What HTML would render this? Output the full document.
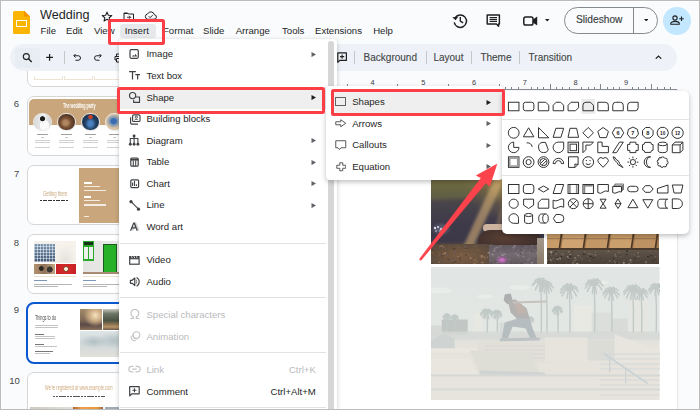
<!DOCTYPE html>
<html><head><meta charset="utf-8">
<style>
*{margin:0;padding:0;box-sizing:border-box}
html,body{width:700px;height:410px;overflow:hidden}
body{position:relative;background:#f9fbfd;font-family:"Liberation Sans",sans-serif;color:#1f1f1f}
.a{position:absolute}
.t{position:absolute;white-space:nowrap;line-height:1}
.mb{font-size:9.6px;color:#1f1f1f;top:26.1px}
.tb{font-size:10px;color:#444746;top:52.5px;-webkit-text-stroke:.12px #444746}
.vd{position:absolute;width:1px;background:#c7c7c7}
.rn{position:absolute;top:78.6px;font-size:7.4px;color:#3c4043;line-height:1}
</style></head><body>

<!-- ===== HEADER ===== -->
<div class="a" style="left:13px;top:10.5px;width:17px;height:23.5px;background:#fbb400;border-radius:1.5px;clip-path:polygon(0 0,64% 0,100% 26%,100% 100%,0 100%)"></div>
<div class="a" style="left:24px;top:10.5px;width:6px;height:6px;background:#f29500;clip-path:polygon(0 0,100% 100%,0 100%)"></div>
<div class="a" style="left:16px;top:20.2px;width:11px;height:6.6px;border:1.3px solid #fff"></div>

<div class="t" style="left:40px;top:8.8px;font-size:12.6px;color:#1f1f1f">Wedding</div>
<svg class="a" style="left:101px;top:10.5px" width="12" height="11" viewBox="0 0 24 22"><path d="M12 2.2l2.7 6.2 6.8.6-5.1 4.5 1.5 6.6L12 16.6l-5.9 3.5 1.5-6.6L2.5 9l6.8-.6z" fill="none" stroke="#1f1f1f" stroke-width="2.2" stroke-linejoin="round"/></svg>
<svg class="a" style="left:123px;top:11.5px" width="11.5" height="9" viewBox="0 0 23 18"><path d="M2 2h7l2 2h10v12H2z" fill="none" stroke="#1f1f1f" stroke-width="2"/><path d="M2 2h7l2 2H2z" fill="#1f1f1f"/><path d="M8 10.5h7M12 7.5l3 3-3 3" fill="none" stroke="#1f1f1f" stroke-width="1.8"/></svg>
<svg class="a" style="left:143.5px;top:11px" width="13" height="9" viewBox="0 0 26 18"><path d="M7 16.5h13a4.5 4.5 0 0 0 .6-9 7 7 0 0 0-13.2-1.8A5.5 5.5 0 0 0 7 16.5z" fill="none" stroke="#1f1f1f" stroke-width="2"/><path d="M9.5 10.5l2.8 2.8 5-5" fill="none" stroke="#1f1f1f" stroke-width="2"/></svg>

<div class="t mb" style="left:40.6px">File</div>
<div class="t mb" style="left:66px">Edit</div>
<div class="t mb" style="left:94px">View</div>
<div class="a" style="left:120px;top:23.5px;width:35.5px;height:14px;background:#e6e8eb;border-radius:3px"></div>
<div class="t mb" style="left:124.8px">Insert</div>
<div class="t mb" style="left:163px">Format</div>
<div class="t mb" style="left:203px">Slide</div>
<div class="t mb" style="left:235.7px">Arrange</div>
<div class="t mb" style="left:282px">Tools</div>
<div class="t mb" style="left:315px">Extensions</div>
<div class="t mb" style="left:373.2px">Help</div>


<!-- right header -->
<svg class="a" style="left:0;top:0" width="700" height="410" viewBox="0 0 700 410"><path d="M455.2 17.6A6.2 6.2 0 1 1 454.2 22.4" fill="none" stroke="#1f1f1f" stroke-width="1.5"/><path d="M452.4 17.2l3.2 3.1 2.6-3.6z" fill="#1f1f1f"/><path d="M460.3 17v4.1l2.8 1.8" fill="none" stroke="#1f1f1f" stroke-width="1.35"/><path d="M487.2 14.9h12.2v9.2h-.8v2.2l-2.2-2.2h-9.2z" fill="none" stroke="#1f1f1f" stroke-width="1.45" stroke-linejoin="round"/><path d="M489.6 17.6h7.4M489.6 19.5h7.4M489.6 21.4h7.4" stroke="#1f1f1f" stroke-width="1.1"/><rect x="523.8" y="17" width="9.2" height="8" rx="1.8" fill="none" stroke="#1f1f1f" stroke-width="1.5"/><path d="M533 19.5l4.2-2.9v8.8l-4.2-2.9z" fill="#1f1f1f"/></svg>
<svg class="a" style="left:545px;top:19px" width="4.5" height="2.5" viewBox="0 0 9 5"><path d="M0 0h9L4.5 5z" fill="#1f1f1f"/></svg>
<div class="a" style="left:564.3px;top:6.6px;width:94px;height:27px;border:1px solid #86898c;border-radius:13.5px"></div>
<div class="a" style="left:633px;top:7px;width:1px;height:26px;background:#86898c"></div>
<div class="t" style="left:576px;top:15.2px;font-size:10.2px;color:#3a3d40;-webkit-text-stroke:.15px #3a3d40">Slideshow</div>
<svg class="a" style="left:643.5px;top:18.5px" width="4.5" height="2.5" viewBox="0 0 9 5"><path d="M0 0h9L4.5 5z" fill="#1f1f1f"/></svg>
<div class="a" style="left:663px;top:6.5px;width:28px;height:28px;border-radius:50%;background:#c2e7ff"></div>
<svg class="a" style="left:670.2px;top:14.8px" width="14.5" height="10" viewBox="0 0 29 20"><circle cx="10" cy="6" r="4.2" fill="none" stroke="#1f1f1f" stroke-width="2.2"/><path d="M1.5 18.5v-1.5c0-2.5 4-4.3 8.5-4.3s8.5 1.8 8.5 4.3v1.5z" fill="none" stroke="#1f1f1f" stroke-width="2.2"/><path d="M23 3v9M18.5 7.5h9" stroke="#1f1f1f" stroke-width="2.2"/></svg>
<!-- ===== TOOLBAR ===== -->
<div class="a" style="left:9.5px;top:44px;width:667.5px;height:26.5px;background:#eef2f8;border-radius:13.5px"></div>
<div class="a" style="left:14.9px;top:48.2px;width:25.2px;height:19.7px;background:#e8edf3;border-radius:2.5px"></div>
<svg class="a" style="left:0;top:0" width="700" height="410" viewBox="0 0 700 410"><circle cx="26.3" cy="56.6" r="3" fill="none" stroke="#1f1f1f" stroke-width="1.1"/><path d="M28.5 58.8l3.2 3.2" stroke="#1f1f1f" stroke-width="1.4"/><path d="M49.6 53.9v6.8M46.2 57.3h6.8" stroke="#1f1f1f" stroke-width="1.25"/></svg>

<div class="vd" style="left:63.5px;top:51px;height:13px"></div>
<svg class="a" style="left:72.5px;top:53px" width="9" height="9" viewBox="0 0 18 18"><path d="M5 2L1.5 5.5 5 9" fill="none" stroke="#1f1f1f" stroke-width="2"/><path d="M2 5.5h8.5a4.5 4.5 0 0 1 0 9H5" fill="none" stroke="#1f1f1f" stroke-width="2"/></svg>
<svg class="a" style="left:93px;top:53px" width="9" height="9" viewBox="0 0 18 18"><path d="M13 2l3.5 3.5L13 9" fill="none" stroke="#1f1f1f" stroke-width="2"/><path d="M16 5.5H7.5a4.5 4.5 0 0 0 0 9H13" fill="none" stroke="#1f1f1f" stroke-width="2"/></svg>
<svg class="a" style="left:113.5px;top:52.5px" width="10" height="10" viewBox="0 0 20 20"><path d="M5 7V2h10v5M5 14H2V7h16v7h-3M5 11h10v7H5z" fill="none" stroke="#1f1f1f" stroke-width="2"/></svg>
<svg class="a" style="left:0;top:0" width="700" height="410" viewBox="0 0 700 410"><path d="M337.8 52.9h8.6v7.4h-6.6l-2 2z" fill="none" stroke="#1f1f1f" stroke-width="1.2" stroke-linejoin="round"/><path d="M342.1 54.5v4.2M340 56.6h4.2" stroke="#1f1f1f" stroke-width="1.1"/></svg>
<div class="vd" style="left:354px;top:51px;height:13px"></div>
<div class="t tb" style="left:363.6px">Background</div>
<div class="vd" style="left:426px;top:51px;height:13px"></div>
<div class="t tb" style="left:433.4px">Layout</div>
<div class="vd" style="left:471px;top:51px;height:13px"></div>
<div class="t tb" style="left:480.4px">Theme</div>
<div class="vd" style="left:519px;top:51px;height:13px"></div>
<div class="t tb" style="left:528.6px">Transition</div>
<svg class="a" style="left:655px;top:54.5px" width="7" height="4.5" viewBox="0 0 14 9"><path d="M1.5 7.5L7 2l5.5 5.5" fill="none" stroke="#1f1f1f" stroke-width="2.2"/></svg>


<!-- ===== RULER ===== -->
<div class="a" style="left:340.30px;top:86.5px;width:1px;height:2.5px;background:#80868b"></div>
<div class="a" style="left:346.64px;top:83.5px;width:1px;height:5.5px;background:#80868b"></div>
<div class="a" style="left:352.98px;top:86.5px;width:1px;height:2.5px;background:#80868b"></div>
<div class="a" style="left:359.32px;top:86.5px;width:1px;height:2.5px;background:#80868b"></div>
<div class="a" style="left:365.66px;top:86.5px;width:1px;height:2.5px;background:#80868b"></div>
<div class="a" style="left:378.34px;top:86.5px;width:1px;height:2.5px;background:#80868b"></div>
<div class="a" style="left:384.68px;top:86.5px;width:1px;height:2.5px;background:#80868b"></div>
<div class="a" style="left:391.02px;top:86.5px;width:1px;height:2.5px;background:#80868b"></div>
<div class="a" style="left:397.36px;top:83.5px;width:1px;height:5.5px;background:#80868b"></div>
<div class="a" style="left:403.70px;top:86.5px;width:1px;height:2.5px;background:#80868b"></div>
<div class="a" style="left:410.04px;top:86.5px;width:1px;height:2.5px;background:#80868b"></div>
<div class="a" style="left:416.38px;top:86.5px;width:1px;height:2.5px;background:#80868b"></div>
<div class="a" style="left:429.06px;top:86.5px;width:1px;height:2.5px;background:#80868b"></div>
<div class="a" style="left:435.40px;top:86.5px;width:1px;height:2.5px;background:#80868b"></div>
<div class="a" style="left:441.74px;top:86.5px;width:1px;height:2.5px;background:#80868b"></div>
<div class="a" style="left:448.08px;top:83.5px;width:1px;height:5.5px;background:#80868b"></div>
<div class="a" style="left:454.42px;top:86.5px;width:1px;height:2.5px;background:#80868b"></div>
<div class="a" style="left:460.76px;top:86.5px;width:1px;height:2.5px;background:#80868b"></div>
<div class="a" style="left:467.10px;top:86.5px;width:1px;height:2.5px;background:#80868b"></div>
<div class="a" style="left:479.78px;top:86.5px;width:1px;height:2.5px;background:#80868b"></div>
<div class="a" style="left:486.12px;top:86.5px;width:1px;height:2.5px;background:#80868b"></div>
<div class="a" style="left:492.46px;top:86.5px;width:1px;height:2.5px;background:#80868b"></div>
<div class="a" style="left:498.80px;top:83.5px;width:1px;height:5.5px;background:#80868b"></div>
<div class="a" style="left:505.14px;top:86.5px;width:1px;height:2.5px;background:#80868b"></div>
<div class="a" style="left:511.48px;top:86.5px;width:1px;height:2.5px;background:#80868b"></div>
<div class="a" style="left:517.82px;top:86.5px;width:1px;height:2.5px;background:#80868b"></div>
<div class="a" style="left:530.50px;top:86.5px;width:1px;height:2.5px;background:#80868b"></div>
<div class="a" style="left:536.84px;top:86.5px;width:1px;height:2.5px;background:#80868b"></div>
<div class="a" style="left:543.18px;top:86.5px;width:1px;height:2.5px;background:#80868b"></div>
<div class="a" style="left:549.52px;top:83.5px;width:1px;height:5.5px;background:#80868b"></div>
<div class="a" style="left:555.86px;top:86.5px;width:1px;height:2.5px;background:#80868b"></div>
<div class="a" style="left:562.20px;top:86.5px;width:1px;height:2.5px;background:#80868b"></div>
<div class="a" style="left:568.54px;top:86.5px;width:1px;height:2.5px;background:#80868b"></div>
<div class="a" style="left:581.22px;top:86.5px;width:1px;height:2.5px;background:#80868b"></div>
<div class="a" style="left:587.56px;top:86.5px;width:1px;height:2.5px;background:#80868b"></div>
<div class="a" style="left:593.90px;top:86.5px;width:1px;height:2.5px;background:#80868b"></div>
<div class="a" style="left:600.24px;top:83.5px;width:1px;height:5.5px;background:#80868b"></div>
<div class="a" style="left:606.58px;top:86.5px;width:1px;height:2.5px;background:#80868b"></div>
<div class="a" style="left:612.92px;top:86.5px;width:1px;height:2.5px;background:#80868b"></div>
<div class="a" style="left:619.26px;top:86.5px;width:1px;height:2.5px;background:#80868b"></div>
<div class="a" style="left:631.94px;top:86.5px;width:1px;height:2.5px;background:#80868b"></div>
<div class="a" style="left:638.28px;top:86.5px;width:1px;height:2.5px;background:#80868b"></div>
<div class="a" style="left:644.62px;top:86.5px;width:1px;height:2.5px;background:#80868b"></div>
<div class="a" style="left:650.96px;top:83.5px;width:1px;height:5.5px;background:#80868b"></div>
<div class="a" style="left:657.30px;top:86.5px;width:1px;height:2.5px;background:#80868b"></div>
<div class="a" style="left:663.64px;top:86.5px;width:1px;height:2.5px;background:#80868b"></div>
<div class="a" style="left:669.98px;top:86.5px;width:1px;height:2.5px;background:#80868b"></div>
<div class="rn" style="left:370.5px">4</div>
<div class="rn" style="left:421.2px">5</div>
<div class="rn" style="left:471.9px">6</div>
<div class="rn" style="left:522.7px">7</div>
<div class="rn" style="left:573.4px">8</div>
<div class="rn" style="left:624.1px">9</div>
<div class="a" style="left:337px;top:88.8px;width:339.5px;height:1px;background:#8d9196"></div>


<!-- ===== FILMSTRIP ===== -->
<div class="a" style="left:1px;top:71px;width:118px;height:338px;overflow:hidden">
 <div class="a" style="left:-1px;top:-71px;width:140px;height:410px">
  <!-- slide 5 -->
  <div class="a" style="left:27.3px;top:27.5px;width:106px;height:59.5px;border:1px solid #d6d6d6;border-radius:7px;background:#fff"></div>
  <div class="a" style="left:34.3px;top:75.7px;width:28.5px;height:4px;border:0.8px solid #efe3d4;border-top:none"></div>
  <div class="a" style="left:64px;top:75.7px;width:28.5px;height:4px;border:0.8px solid #efe3d4;border-top:none"></div>
  <div class="a" style="left:94px;top:75.7px;width:28.5px;height:4px;border:0.8px solid #efe3d4;border-top:none"></div>
  <!-- slide 6 -->
  <div class="t" style="left:13.8px;top:99px;font-size:9.5px;color:#444746">6</div>
  <div class="a" style="left:27.3px;top:96px;width:106px;height:59.5px;border:1px solid #d6d6d6;border-radius:7px;background:#fff;overflow:hidden">
    <div class="a" style="left:1.1px;top:1.7px;width:101px;height:26.5px;background:#c9a67c;border-radius:5px 5px 0 0"></div>
    <div class="t" style="left:34.4px;top:6.0px;font-size:6.6px;font-weight:bold;color:#fff;font-family:'Liberation Sans',sans-serif;transform:scaleX(.56);transform-origin:0 0">The wedding party</div>
    <div class="a" style="left:5.2px;top:15.7px;width:18.8px;height:18.8px;border-radius:50%;border:0.6px solid #e8e8e8;background:radial-gradient(circle at 50% 30%,#1c1c1c 0 16%,transparent 20%),radial-gradient(ellipse at 62% 72%,#fafafa 0 30%,transparent 34%),linear-gradient(90deg,#d9d9d9,#f0f0f0 60%,#cfcfcf)"></div>
    <div class="a" style="left:9.1px;top:36.8px;width:11px;height:.9px;background:#a0a0a0"></div>
    <div class="a" style="left:13.1px;top:40.0px;width:3px;height:.6px;background:#c8c8c8"></div>
    <div class="a" style="left:7.1px;top:42.5px;width:15px;height:9px;background:repeating-linear-gradient(#d2d2d2 0 .6px,transparent .6px 2.3px)"></div>
    <div class="a" style="left:28.9px;top:15.7px;width:18.8px;height:18.8px;border-radius:50%;border:0.6px solid #e8e8e8;background:radial-gradient(ellipse at 45% 55%,#b08560 0 18%,#7a5236 38%,#4e3322 70%,#3a2618)"></div>
    <div class="a" style="left:32.8px;top:36.8px;width:11px;height:.9px;background:#a0a0a0"></div>
    <div class="a" style="left:36.8px;top:40.0px;width:3px;height:.6px;background:#c8c8c8"></div>
    <div class="a" style="left:30.8px;top:42.5px;width:15px;height:9px;background:repeating-linear-gradient(#d2d2d2 0 .6px,transparent .6px 2.3px)"></div>
    <div class="a" style="left:53.1px;top:15.7px;width:18.8px;height:18.8px;border-radius:50%;border:0.6px solid #e8e8e8;background:radial-gradient(circle at 50% 18%,#c8402e 0 12%,transparent 16%),radial-gradient(ellipse at 50% 60%,#4a80c0 0 18%,#223f60 45%,#142438)"></div>
    <div class="a" style="left:57.0px;top:36.8px;width:11px;height:.9px;background:#a0a0a0"></div>
    <div class="a" style="left:61.0px;top:40.0px;width:3px;height:.6px;background:#c8c8c8"></div>
    <div class="a" style="left:55.0px;top:42.5px;width:15px;height:9px;background:repeating-linear-gradient(#d2d2d2 0 .6px,transparent .6px 2.3px)"></div>
    <div class="a" style="left:76.6px;top:15.7px;width:18.8px;height:18.8px;border-radius:50%;border:0.6px solid #e8e8e8;background:radial-gradient(ellipse at 45% 45%,#3a6ab0 0 18%,#7a98b8 30%,#d8c0a0 55%,#ead8c0)"></div>
    <div class="a" style="left:80.5px;top:36.8px;width:11px;height:.9px;background:#a0a0a0"></div>
    <div class="a" style="left:84.5px;top:40.0px;width:3px;height:.6px;background:#c8c8c8"></div>
    <div class="a" style="left:78.5px;top:42.5px;width:15px;height:9px;background:repeating-linear-gradient(#d2d2d2 0 .6px,transparent .6px 2.3px)"></div>
  </div>
  <!-- slide 7 -->
  <div class="t" style="left:14px;top:168.5px;font-size:9.5px;color:#444746">7</div>
  <div class="a" style="left:27.3px;top:165px;width:106px;height:60px;border:1px solid #d6d6d6;border-radius:7px;background:#fff;overflow:hidden">
    <div class="a" style="left:50.8px;top:2.1px;width:60px;height:54.8px;background:#c9a67c"></div>
    <div class="t" style="left:14.6px;top:23.6px;font-size:7px;color:#c9a67c;transform:scaleX(.6);transform-origin:0 0">Getting there</div>
    <div class="a" style="left:11.9px;top:33.6px;width:28.5px;height:1.6px;background:repeating-linear-gradient(90deg,#333 0 2px,transparent 2px 2.6px)"></div>
    <div class="a" style="left:55.3px;top:16.4px;width:8px;height:1.5px;background:#fff"></div>
    <div class="a" style="left:55.3px;top:20.3px;width:16px;height:1.2px;background:#f4ece2"></div>
    <div class="a" style="left:55.3px;top:24.3px;width:22px;height:1.2px;background:#f4ece2"></div>
    <div class="a" style="left:55.3px;top:30.3px;width:7px;height:1.5px;background:#fff"></div>
    <div class="a" style="left:55.3px;top:34.2px;width:16px;height:1.2px;background:#f4ece2"></div>
    <div class="a" style="left:55.3px;top:38.4px;width:22px;height:1.2px;background:#f4ece2"></div>
    <div class="a" style="left:55.3px;top:49.8px;width:5px;height:.7px;background:#f4ece2"></div>
  </div>
  <!-- slide 8 -->
  <div class="t" style="left:13.8px;top:237.5px;font-size:9.5px;color:#444746">8</div>
  <div class="a" style="left:27.3px;top:234px;width:106px;height:60px;border:1px solid #d6d6d6;border-radius:7px;background:#fff;overflow:hidden">
    <div class="a" style="left:5.6px;top:6.1px;width:42px;height:22px;background:#f7f3ec"></div>
    <div class="a" style="left:27px;top:10px;width:20.6px;height:18px;background:radial-gradient(ellipse at 50% 80%,#e6e3de,#f5f2ec 70%)"></div>
    <div class="a" style="left:5.6px;top:6.1px;width:21.4px;height:21px;background:repeating-linear-gradient(90deg,rgba(240,245,250,.55) 0 .8px,transparent .8px 3px),repeating-linear-gradient(0deg,rgba(240,245,250,.5) 0 .8px,transparent .8px 3px),linear-gradient(180deg,#8aa2bc,#5d7792 55%,#3e5570)"></div>
    <div class="a" style="left:5.6px;top:6.1px;width:21.4px;height:3px;background:#f2f0ea"></div>
    <div class="a" style="left:5.6px;top:28.6px;width:21px;height:10.3px;background:radial-gradient(circle at 35% 45%,#2e2a26 0 14%,transparent 18%),radial-gradient(circle at 75% 55%,#3a3632 0 16%,transparent 20%),linear-gradient(90deg,#b39270,#8f7257 50%,#c4a684)"></div>
    <div class="a" style="left:27.6px;top:28.6px;width:20px;height:10.3px;background:radial-gradient(circle at 50% 50%,#f5ead8 0 14%,#7b4a2a 20%,#d3282b 30%,#c21f25)"></div>
    <div class="a" style="left:5.6px;top:40.5px;width:42px;height:.7px;background:#eee2d0"></div>
    <div class="a" style="left:5.6px;top:44.7px;width:13px;height:1.2px;background:#7d97bb"></div>
    <div class="a" style="left:5.6px;top:48.6px;width:38px;height:.7px;background:#b5b5b5"></div>
    <div class="a" style="left:5.6px;top:50.8px;width:24px;height:.7px;background:#b5b5b5"></div>
    <div class="a" style="left:54.4px;top:6.1px;width:50px;height:32.5px;background:linear-gradient(90deg,#e4e4e2,#ececea)"></div>
    <div class="a" style="left:54.4px;top:6.1px;width:11.5px;height:19.5px;background:#2aa82a"></div>
    <div class="a" style="left:55.6px;top:6.9px;width:9.1px;height:3.4px;background:#16301a"></div>
    <div class="a" style="left:55.6px;top:11.6px;width:4px;height:12.6px;background:#eef0ee"></div>
    <div class="a" style="left:60.7px;top:11.6px;width:4px;height:12.6px;background:#eef0ee"></div>
    <div class="a" style="left:74.6px;top:9.4px;width:14px;height:28px;background:#1b5a1e"></div>
    <div class="a" style="left:75.6px;top:10.4px;width:12px;height:27px;background:#26b128"></div>
    <div class="a" style="left:54.4px;top:37px;width:50px;height:2.3px;background:#a88a70"></div>
    <div class="a" style="left:54.4px;top:40.5px;width:42px;height:.7px;background:#eee2d0"></div>
    <div class="a" style="left:54.4px;top:44.7px;width:13px;height:1.2px;background:#7d97bb"></div>
    <div class="a" style="left:54.4px;top:48.6px;width:38px;height:.7px;background:#b5b5b5"></div>
    <div class="a" style="left:54.4px;top:50.8px;width:24px;height:.7px;background:#b5b5b5"></div>
  </div>
  <!-- slide 9 -->
  <div class="t" style="left:13.8px;top:305px;font-size:9.5px;color:#444746">9</div>
  <div class="a" style="left:26.3px;top:302.2px;width:108px;height:62.2px;border:2px solid #0b57d0;border-radius:8px;background:#fff;overflow:hidden">
    <div class="t" style="left:6.8px;top:10.8px;font-size:6.6px;color:#444;transform:scaleX(.58);transform-origin:0 0">Things to do</div>
    <div class="a" style="left:6.8px;top:20.8px;width:23px;height:5px;background:repeating-linear-gradient(#c4c4c4 0 .6px,transparent .6px 1.9px)"></div>
    <div class="a" style="left:6.8px;top:30.2px;width:9px;height:.8px;background:#777"></div>
    <div class="a" style="left:6.8px;top:32.2px;width:20px;height:3.5px;background:repeating-linear-gradient(#c4c4c4 0 .6px,transparent .6px 1.9px)"></div>
    <div class="a" style="left:6.8px;top:39.6px;width:9px;height:.8px;background:#777"></div>
    <div class="a" style="left:6.8px;top:41.6px;width:22px;height:2px;background:repeating-linear-gradient(#c4c4c4 0 .6px,transparent .6px 1.9px)"></div>
    <div class="a" style="left:6.8px;top:46.5px;width:18px;height:.8px;background:#777"></div>
    <div class="a" style="left:6.8px;top:48.5px;width:15px;height:2px;background:repeating-linear-gradient(#c4c4c4 0 .6px,transparent .6px 1.9px)"></div>
    <div class="a" style="left:51.7px;top:5.2px;width:22px;height:20.8px;background:radial-gradient(ellipse at 70% 30%,#f4e2c0 0,#d0b088 25%,transparent 55%),linear-gradient(180deg,#a08a68,#806c58 50%,#5a4a48 75%,#8a7058)"></div>
    <div class="a" style="left:74.5px;top:5.2px;width:22px;height:20.8px;background:linear-gradient(180deg,#c8c8c0 0,#6e7868 22%,#4a5242 55%,#8a7050 72%,#b89468 85%,#6a5848)"></div>
    <div class="a" style="left:51.7px;top:26.8px;width:45px;height:26px;background:radial-gradient(ellipse at 30% 40%,rgba(150,170,175,.55) 0,transparent 30%),radial-gradient(ellipse at 75% 35%,rgba(150,170,175,.5) 0,transparent 35%),linear-gradient(180deg,#dfe5e6,#d0d8d9 50%,#e2e0da)"></div>
  </div>
  <!-- slide 10 -->
  <div class="t" style="left:9.2px;top:375.5px;font-size:9.5px;color:#444746">10</div>
  <div class="a" style="left:27.3px;top:372px;width:106px;height:60px;border:1px solid #d6d6d6;border-radius:7px;background:#fff;overflow:hidden">
    <div class="t" style="left:16.7px;top:11.9px;font-size:6.6px;color:#cfa87c;transform:scaleX(.6);transform-origin:0 0">We&#8217;re registered at www.example.com</div>
    <div class="a" style="left:24.5px;top:23.2px;width:52px;height:1.1px;background:repeating-linear-gradient(90deg,#555 0 2.2px,transparent 2.2px 2.8px)"></div>
    <div class="a" style="left:2px;top:34px;width:43px;height:10px;background:linear-gradient(90deg,#cfcac2,#e2dfda)"></div>
    <div class="a" style="left:44.7px;top:34px;width:30px;height:10px;background:linear-gradient(90deg,#b06a30,#f0a040 30%,#e89a3a 80%,#9a6a48)"></div>
    <div class="a" style="left:77px;top:34px;width:30px;height:10px;background:#9eacb6"></div>
  </div>
 </div>
</div>

<!-- ===== SLIDE CANVAS ===== -->
<div class="a" style="left:337px;top:90px;width:340px;height:320px;background:#fff;box-shadow:1px 0 1px rgba(0,0,0,.08)"></div>
<!-- photos -->
<div class="a" style="left:431.3px;top:120px;width:112.4px;height:143.8px;overflow:hidden;background:linear-gradient(180deg,#6a5e40 0%,#6e6444 42%,#5e5642 48%,#48444a 58%,#3e3a4a 72%,#3c3848 84%,#5a4a40 88%,#6e5846 100%)">
  <div class="a" style="left:20px;top:40px;width:100px;height:70px;background:radial-gradient(ellipse at 66% 36%,rgba(245,215,140,.95) 0,rgba(215,175,100,.6) 12%,rgba(160,130,75,.25) 35%,transparent 58%)"></div>
  
  
  <svg class="a" style="left:0;top:0" width="112.4" height="143.8"><defs><filter id="bb" x="-50%" y="-50%" width="200%" height="200%"><feGaussianBlur stdDeviation="1.6"/></filter></defs><path d="M64.7 56.0 L74.7 56.0 L40.7 130.0 L30.7 130.0 Z" fill="rgba(220,180,120,.55)" filter="url(#bb)"/><path d="M78.7 56.0 L84.7 56.0 L68.7 110.0 L63.7 110.0 Z" fill="rgba(220,180,120,.3)" filter="url(#bb)"/><path d="M-0.3 62.0 L48.7 62.0 L38.7 78.0 L-0.3 80.0 Z" fill="rgba(120,125,70,.35)" filter="url(#bb)"/></svg>
  <div class="a" style="left:0px;top:102px;width:20px;height:14px;background:radial-gradient(ellipse,rgba(160,170,200,.45),transparent 72%)"></div>
  <div class="a" style="left:52px;top:104px;width:22px;height:8px;border-radius:4px;background:#cdb4a0"></div>
  <div class="a" style="left:47px;top:110px;width:62px;height:20px;border-radius:12px 8px 0 0;background:radial-gradient(ellipse at 45% 40%,#5a4034,#3e2e2c 75%)"></div>
  <div class="a" style="left:0;top:124px;width:62px;height:20px;background:radial-gradient(ellipse at 50% 60%,#7a5c44,#64503e 60%,#544640)"></div>
  <div class="a" style="left:58px;top:125px;width:50px;height:19px;background:linear-gradient(180deg,#5f585e,#746a70 50%,#625a5e)"></div>
  <svg class="a" style="left:0;top:0" width="112.4" height="143.8"><ellipse cx="50.7" cy="135.6" rx="1.34" ry="0.95" fill="#b89070" opacity=".6"/><ellipse cx="50.6" cy="141.2" rx="0.72" ry="0.51" fill="#5a4a40" opacity=".6"/><ellipse cx="53.3" cy="136.7" rx="0.72" ry="0.51" fill="#b89070" opacity=".6"/><ellipse cx="34.0" cy="126.7" rx="1.24" ry="0.89" fill="#6a6068" opacity=".6"/><ellipse cx="71.1" cy="136.3" rx="0.89" ry="0.64" fill="#6a5c60" opacity=".6"/><ellipse cx="73.2" cy="136.7" rx="0.69" ry="0.49" fill="#8a8088" opacity=".6"/><ellipse cx="93.2" cy="126.2" rx="0.59" ry="0.42" fill="#50484c" opacity=".6"/><ellipse cx="67.2" cy="139.8" rx="0.83" ry="0.60" fill="#a09aa0" opacity=".6"/><ellipse cx="94.4" cy="134.9" rx="1.10" ry="0.78" fill="#6a5c60" opacity=".6"/><ellipse cx="0.5" cy="126.6" rx="1.11" ry="0.79" fill="#b89070" opacity=".6"/><ellipse cx="111.7" cy="143.9" rx="1.27" ry="0.90" fill="#9a909a" opacity=".6"/><ellipse cx="35.3" cy="129.4" rx="0.80" ry="0.57" fill="#a07850" opacity=".6"/><ellipse cx="63.1" cy="127.1" rx="0.65" ry="0.46" fill="#9a909a" opacity=".6"/><ellipse cx="43.3" cy="143.2" rx="1.27" ry="0.91" fill="#a07850" opacity=".6"/><ellipse cx="23.9" cy="142.6" rx="0.60" ry="0.43" fill="#b89070" opacity=".6"/><ellipse cx="109.8" cy="132.6" rx="0.62" ry="0.44" fill="#50484c" opacity=".6"/><ellipse cx="87.2" cy="130.1" rx="0.63" ry="0.45" fill="#9a909a" opacity=".6"/><ellipse cx="1.7" cy="132.8" rx="1.34" ry="0.95" fill="#8a6040" opacity=".6"/><ellipse cx="27.6" cy="126.9" rx="0.61" ry="0.44" fill="#b89070" opacity=".6"/><ellipse cx="19.9" cy="135.6" rx="0.94" ry="0.67" fill="#8a6040" opacity=".6"/><ellipse cx="110.4" cy="139.6" rx="0.91" ry="0.65" fill="#6a5c60" opacity=".6"/><ellipse cx="13.0" cy="133.0" rx="0.74" ry="0.53" fill="#3a2e2a" opacity=".6"/><ellipse cx="96.8" cy="143.5" rx="1.06" ry="0.76" fill="#8a8088" opacity=".6"/><ellipse cx="23.6" cy="132.5" rx="1.28" ry="0.91" fill="#6a6068" opacity=".6"/><ellipse cx="64.6" cy="125.8" rx="0.68" ry="0.49" fill="#6a5c60" opacity=".6"/><ellipse cx="28.9" cy="139.7" rx="0.84" ry="0.60" fill="#3a2e2a" opacity=".6"/><ellipse cx="43.3" cy="126.4" rx="0.74" ry="0.53" fill="#6a6068" opacity=".6"/><ellipse cx="27.2" cy="136.4" rx="0.87" ry="0.62" fill="#b89070" opacity=".6"/><ellipse cx="14.2" cy="136.2" rx="1.26" ry="0.90" fill="#8a6040" opacity=".6"/><ellipse cx="97.1" cy="128.5" rx="0.69" ry="0.49" fill="#50484c" opacity=".6"/><ellipse cx="91.6" cy="129.7" rx="0.72" ry="0.51" fill="#a09aa0" opacity=".6"/><ellipse cx="22.0" cy="143.1" rx="1.30" ry="0.93" fill="#5a4a40" opacity=".6"/><ellipse cx="8.8" cy="125.9" rx="0.65" ry="0.47" fill="#5a4a40" opacity=".6"/><ellipse cx="107.8" cy="129.5" rx="1.15" ry="0.82" fill="#9a909a" opacity=".6"/><ellipse cx="47.1" cy="142.2" rx="0.97" ry="0.69" fill="#5a4a40" opacity=".6"/><ellipse cx="19.6" cy="138.7" rx="0.62" ry="0.44" fill="#8a6040" opacity=".6"/><ellipse cx="53.7" cy="137.4" rx="1.08" ry="0.77" fill="#a07850" opacity=".6"/><ellipse cx="31.4" cy="142.4" rx="0.73" ry="0.52" fill="#a07850" opacity=".6"/><ellipse cx="7.7" cy="132.8" rx="0.77" ry="0.55" fill="#a07850" opacity=".6"/><ellipse cx="19.7" cy="132.0" rx="1.04" ry="0.74" fill="#8a6040" opacity=".6"/><ellipse cx="10.3" cy="127.6" rx="0.94" ry="0.67" fill="#3a2e2a" opacity=".6"/><ellipse cx="73.6" cy="138.1" rx="1.05" ry="0.75" fill="#50484c" opacity=".6"/><ellipse cx="66.1" cy="142.5" rx="0.96" ry="0.68" fill="#9a909a" opacity=".6"/><ellipse cx="78.5" cy="143.3" rx="0.58" ry="0.41" fill="#8a8088" opacity=".6"/><ellipse cx="54.0" cy="138.9" rx="0.83" ry="0.59" fill="#a07850" opacity=".6"/><ellipse cx="8.4" cy="135.4" rx="1.18" ry="0.84" fill="#6a6068" opacity=".6"/><ellipse cx="82.6" cy="127.5" rx="1.37" ry="0.98" fill="#9a909a" opacity=".6"/><ellipse cx="39.4" cy="138.0" rx="1.32" ry="0.94" fill="#b89070" opacity=".6"/><ellipse cx="105.8" cy="125.6" rx="0.98" ry="0.70" fill="#8a8088" opacity=".6"/><ellipse cx="70.0" cy="132.3" rx="1.05" ry="0.75" fill="#a09aa0" opacity=".6"/><ellipse cx="8.1" cy="126.7" rx="0.66" ry="0.47" fill="#3a2e2a" opacity=".6"/><ellipse cx="98.5" cy="138.8" rx="0.89" ry="0.63" fill="#a09aa0" opacity=".6"/><ellipse cx="51.3" cy="133.8" rx="1.01" ry="0.72" fill="#5a4a40" opacity=".6"/><ellipse cx="84.0" cy="125.6" rx="1.07" ry="0.76" fill="#6a5c60" opacity=".6"/><ellipse cx="2.5" cy="143.2" rx="0.65" ry="0.47" fill="#5a4a40" opacity=".6"/><ellipse cx="73.9" cy="134.2" rx="1.31" ry="0.94" fill="#9a909a" opacity=".6"/><ellipse cx="33.7" cy="137.9" rx="0.73" ry="0.52" fill="#8a6040" opacity=".6"/><ellipse cx="84.4" cy="131.5" rx="1.34" ry="0.96" fill="#6a5c60" opacity=".6"/><ellipse cx="99.9" cy="131.2" rx="1.12" ry="0.80" fill="#50484c" opacity=".6"/><ellipse cx="71.0" cy="140.3" rx="1.19" ry="0.85" fill="#50484c" opacity=".6"/><ellipse cx="98.6" cy="132.3" rx="1.05" ry="0.75" fill="#9a909a" opacity=".6"/><ellipse cx="23.5" cy="127.6" rx="0.85" ry="0.61" fill="#a07850" opacity=".6"/><ellipse cx="79.7" cy="143.1" rx="0.79" ry="0.57" fill="#50484c" opacity=".6"/><ellipse cx="12.6" cy="134.0" rx="1.34" ry="0.96" fill="#b89070" opacity=".6"/><ellipse cx="42.8" cy="134.9" rx="1.12" ry="0.80" fill="#6a6068" opacity=".6"/><ellipse cx="94.0" cy="143.7" rx="0.94" ry="0.67" fill="#8a8088" opacity=".6"/><ellipse cx="92.8" cy="130.3" rx="1.07" ry="0.76" fill="#9a909a" opacity=".6"/><ellipse cx="63.9" cy="130.9" rx="1.22" ry="0.87" fill="#8a8088" opacity=".6"/><ellipse cx="71.8" cy="132.7" rx="0.72" ry="0.51" fill="#9a909a" opacity=".6"/><ellipse cx="26.6" cy="127.7" rx="0.60" ry="0.43" fill="#6a6068" opacity=".6"/><ellipse cx="12.9" cy="127.1" rx="1.01" ry="0.72" fill="#6a6068" opacity=".6"/><ellipse cx="90.4" cy="143.2" rx="1.13" ry="0.81" fill="#50484c" opacity=".6"/><ellipse cx="92.3" cy="129.9" rx="1.16" ry="0.83" fill="#6a5c60" opacity=".6"/><ellipse cx="59.9" cy="125.7" rx="0.75" ry="0.54" fill="#9a909a" opacity=".6"/><ellipse cx="60.4" cy="143.0" rx="0.98" ry="0.70" fill="#50484c" opacity=".6"/><ellipse cx="44.1" cy="140.0" rx="1.32" ry="0.94" fill="#a07850" opacity=".6"/><ellipse cx="46.0" cy="142.0" rx="0.89" ry="0.63" fill="#b89070" opacity=".6"/><ellipse cx="50.8" cy="136.9" rx="1.32" ry="0.95" fill="#b89070" opacity=".6"/><ellipse cx="61.6" cy="137.4" rx="0.98" ry="0.70" fill="#9a909a" opacity=".6"/><ellipse cx="51.9" cy="137.4" rx="0.73" ry="0.52" fill="#6a6068" opacity=".6"/><ellipse cx="97.0" cy="140.2" rx="1.34" ry="0.95" fill="#8a8088" opacity=".6"/><ellipse cx="23.9" cy="142.1" rx="1.38" ry="0.99" fill="#3a2e2a" opacity=".6"/><ellipse cx="60.1" cy="140.0" rx="0.83" ry="0.59" fill="#8a8088" opacity=".6"/><ellipse cx="39.0" cy="126.6" rx="0.93" ry="0.66" fill="#5a4a40" opacity=".6"/><ellipse cx="47.2" cy="130.2" rx="1.33" ry="0.95" fill="#8a6040" opacity=".6"/><ellipse cx="90.6" cy="126.2" rx="1.23" ry="0.88" fill="#50484c" opacity=".6"/><ellipse cx="59.7" cy="138.0" rx="1.33" ry="0.95" fill="#6a5c60" opacity=".6"/><ellipse cx="16.7" cy="134.8" rx="1.17" ry="0.83" fill="#6a6068" opacity=".6"/><ellipse cx="77.2" cy="143.0" rx="0.97" ry="0.70" fill="#8a8088" opacity=".6"/><ellipse cx="84.9" cy="133.3" rx="1.03" ry="0.74" fill="#a09aa0" opacity=".6"/><ellipse cx="71.6" cy="134.9" rx="1.27" ry="0.91" fill="#a09aa0" opacity=".6"/><ellipse cx="28.7" cy="137.8" rx="1.36" ry="0.97" fill="#5a4a40" opacity=".6"/><ellipse cx="23.3" cy="141.2" rx="1.37" ry="0.98" fill="#5a4a40" opacity=".6"/><ellipse cx="30.6" cy="134.5" rx="0.91" ry="0.65" fill="#a07850" opacity=".6"/><ellipse cx="56.4" cy="136.5" rx="0.58" ry="0.42" fill="#8a8088" opacity=".6"/><ellipse cx="57.8" cy="132.6" rx="1.23" ry="0.88" fill="#a09aa0" opacity=".6"/><ellipse cx="13.7" cy="126.8" rx="0.70" ry="0.50" fill="#5a4a40" opacity=".6"/><ellipse cx="51.4" cy="142.5" rx="1.23" ry="0.88" fill="#b89070" opacity=".6"/><ellipse cx="30.2" cy="134.0" rx="0.67" ry="0.48" fill="#b89070" opacity=".6"/><ellipse cx="100.9" cy="142.8" rx="1.33" ry="0.95" fill="#a09aa0" opacity=".6"/><ellipse cx="35.5" cy="128.6" rx="1.08" ry="0.77" fill="#3a2e2a" opacity=".6"/><ellipse cx="14.5" cy="139.8" rx="0.58" ry="0.41" fill="#8a6040" opacity=".6"/><ellipse cx="17.4" cy="125.2" rx="0.80" ry="0.57" fill="#6a6068" opacity=".6"/><ellipse cx="39.8" cy="136.8" rx="0.65" ry="0.46" fill="#6a6068" opacity=".6"/><ellipse cx="65.2" cy="141.2" rx="1.08" ry="0.77" fill="#50484c" opacity=".6"/><ellipse cx="78.6" cy="141.7" rx="0.58" ry="0.41" fill="#6a5c60" opacity=".6"/><ellipse cx="92.4" cy="136.7" rx="1.01" ry="0.72" fill="#a09aa0" opacity=".6"/><ellipse cx="71.5" cy="135.1" rx="1.28" ry="0.91" fill="#a09aa0" opacity=".6"/><ellipse cx="65.7" cy="127.6" rx="1.33" ry="0.95" fill="#9a909a" opacity=".6"/><ellipse cx="101.1" cy="131.0" rx="0.82" ry="0.59" fill="#50484c" opacity=".6"/><ellipse cx="24.4" cy="144.0" rx="1.31" ry="0.93" fill="#8a6040" opacity=".6"/><ellipse cx="99.6" cy="127.5" rx="0.63" ry="0.45" fill="#6a5c60" opacity=".6"/><ellipse cx="10.9" cy="140.8" rx="0.91" ry="0.65" fill="#6a6068" opacity=".6"/><ellipse cx="14.1" cy="132.7" rx="1.14" ry="0.81" fill="#a07850" opacity=".6"/><ellipse cx="10.8" cy="135.8" rx="0.86" ry="0.61" fill="#3a2e2a" opacity=".6"/><ellipse cx="12.9" cy="134.6" rx="1.20" ry="0.85" fill="#5a4a40" opacity=".6"/><ellipse cx="111.8" cy="140.8" rx="1.23" ry="0.88" fill="#6a5c60" opacity=".6"/><ellipse cx="11.9" cy="125.7" rx="1.02" ry="0.73" fill="#5a4a40" opacity=".6"/><ellipse cx="101.4" cy="134.1" rx="0.72" ry="0.51" fill="#8a8088" opacity=".6"/><ellipse cx="22.8" cy="141.0" rx="1.39" ry="0.99" fill="#6a6068" opacity=".6"/><ellipse cx="10.7" cy="126.2" rx="1.36" ry="0.97" fill="#b89070" opacity=".6"/><ellipse cx="8.7" cy="126.8" rx="0.89" ry="0.63" fill="#b89070" opacity=".6"/><ellipse cx="57.7" cy="133.2" rx="1.06" ry="0.76" fill="#8a8088" opacity=".6"/><ellipse cx="71.0" cy="125.8" rx="0.73" ry="0.52" fill="#6a5c60" opacity=".6"/><ellipse cx="50.8" cy="139.0" rx="0.90" ry="0.64" fill="#8a6040" opacity=".6"/><ellipse cx="67.7" cy="126.8" rx="1.23" ry="0.88" fill="#9a909a" opacity=".6"/><ellipse cx="100.0" cy="140.2" rx="1.15" ry="0.82" fill="#6a5c60" opacity=".6"/><ellipse cx="63.8" cy="128.6" rx="1.05" ry="0.75" fill="#9a909a" opacity=".6"/><ellipse cx="90.1" cy="129.9" rx="1.33" ry="0.95" fill="#50484c" opacity=".6"/><ellipse cx="91.2" cy="132.7" rx="1.31" ry="0.94" fill="#a09aa0" opacity=".6"/><ellipse cx="77.8" cy="139.6" rx="1.20" ry="0.86" fill="#6a5c60" opacity=".6"/><ellipse cx="23.2" cy="128.5" rx="1.23" ry="0.88" fill="#3a2e2a" opacity=".6"/><ellipse cx="52.5" cy="125.2" rx="0.86" ry="0.61" fill="#6a6068" opacity=".6"/><ellipse cx="101.1" cy="125.9" rx="0.79" ry="0.56" fill="#9a909a" opacity=".6"/><ellipse cx="37.8" cy="137.5" rx="1.04" ry="0.74" fill="#5a4a40" opacity=".6"/><ellipse cx="8.6" cy="134.8" rx="0.98" ry="0.70" fill="#8a6040" opacity=".6"/><ellipse cx="78.5" cy="139.5" rx="1.38" ry="0.99" fill="#8a8088" opacity=".6"/><ellipse cx="12.9" cy="127.1" rx="0.76" ry="0.54" fill="#b89070" opacity=".6"/><ellipse cx="45.0" cy="126.0" rx="0.72" ry="0.52" fill="#b89070" opacity=".6"/><ellipse cx="1.2" cy="129.9" rx="0.79" ry="0.57" fill="#3a2e2a" opacity=".6"/><ellipse cx="61.6" cy="134.6" rx="1.37" ry="0.98" fill="#a09aa0" opacity=".6"/><ellipse cx="94.8" cy="126.9" rx="0.93" ry="0.67" fill="#8a8088" opacity=".6"/><ellipse cx="61.5" cy="137.7" rx="1.36" ry="0.97" fill="#6a5c60" opacity=".6"/><ellipse cx="104.2" cy="128.0" rx="0.96" ry="0.68" fill="#50484c" opacity=".6"/><ellipse cx="95.8" cy="135.3" rx="1.06" ry="0.76" fill="#6a5c60" opacity=".6"/><ellipse cx="105.9" cy="133.0" rx="1.00" ry="0.72" fill="#a09aa0" opacity=".6"/><ellipse cx="35.0" cy="135.1" rx="0.97" ry="0.69" fill="#3a2e2a" opacity=".6"/><ellipse cx="62.8" cy="130.4" rx="1.16" ry="0.83" fill="#9a909a" opacity=".6"/><ellipse cx="3.0" cy="139.7" rx="1.05" ry="0.75" fill="#6a6068" opacity=".6"/><ellipse cx="17.5" cy="139.3" rx="0.89" ry="0.63" fill="#3a2e2a" opacity=".6"/><ellipse cx="83.8" cy="126.0" rx="1.39" ry="0.99" fill="#9a909a" opacity=".6"/><ellipse cx="8.2" cy="142.2" rx="0.92" ry="0.66" fill="#b89070" opacity=".6"/><ellipse cx="28.1" cy="139.4" rx="0.60" ry="0.43" fill="#a07850" opacity=".6"/><ellipse cx="105.0" cy="138.7" rx="0.95" ry="0.68" fill="#50484c" opacity=".6"/><ellipse cx="67.6" cy="127.2" rx="1.08" ry="0.77" fill="#6a5c60" opacity=".6"/><ellipse cx="13.2" cy="141.4" rx="0.86" ry="0.61" fill="#8a6040" opacity=".6"/><ellipse cx="13.9" cy="133.4" rx="1.12" ry="0.80" fill="#b89070" opacity=".6"/><ellipse cx="67.3" cy="137.2" rx="1.13" ry="0.81" fill="#9a909a" opacity=".6"/><ellipse cx="87.1" cy="135.1" rx="1.40" ry="1.00" fill="#9a909a" opacity=".6"/><ellipse cx="82.2" cy="129.5" rx="0.66" ry="0.47" fill="#9a909a" opacity=".6"/><ellipse cx="87.8" cy="136.9" rx="0.86" ry="0.62" fill="#9a909a" opacity=".6"/><ellipse cx="68.3" cy="138.8" rx="1.15" ry="0.82" fill="#50484c" opacity=".6"/><ellipse cx="70.9" cy="139.3" rx="0.72" ry="0.51" fill="#50484c" opacity=".6"/><ellipse cx="56.2" cy="137.4" rx="0.72" ry="0.52" fill="#8a8088" opacity=".6"/><ellipse cx="70.4" cy="125.2" rx="0.78" ry="0.56" fill="#8a8088" opacity=".6"/><ellipse cx="69.8" cy="126.9" rx="1.01" ry="0.72" fill="#8a8088" opacity=".6"/><ellipse cx="84.6" cy="142.3" rx="0.70" ry="0.50" fill="#50484c" opacity=".6"/><ellipse cx="70.7" cy="132.1" rx="0.96" ry="0.69" fill="#50484c" opacity=".6"/><ellipse cx="37.9" cy="134.4" rx="0.67" ry="0.48" fill="#a07850" opacity=".6"/><ellipse cx="89.9" cy="133.5" rx="1.25" ry="0.89" fill="#50484c" opacity=".6"/><circle cx="4" cy="108" r="1.2" fill="#eef2fa" opacity=".85"/><circle cx="7" cy="107" r="1.0" fill="#eef2fa" opacity=".85"/><circle cx="10" cy="109" r="1.1" fill="#eef2fa" opacity=".85"/><circle cx="13" cy="108" r="0.9" fill="#eef2fa" opacity=".85"/><circle cx="5" cy="111" r="0.8" fill="#eef2fa" opacity=".85"/><circle cx="9" cy="111" r="0.7" fill="#eef2fa" opacity=".85"/></svg>
  <div class="a" style="left:64px;top:135px;width:14px;height:10px;background:radial-gradient(ellipse,rgba(235,120,230,.95),rgba(200,100,200,.3) 45%,transparent 70%)"></div>
  <div class="a" style="left:106px;top:118px;width:7px;height:26px;background:linear-gradient(180deg,#a49a8c,#8a7a6a)"></div>
</div>
<div class="a" style="left:547.2px;top:120px;width:112px;height:143.8px;overflow:hidden;background:linear-gradient(180deg,#6a5a40 0%,#8a6c48 75%,#a27a50 81%,#b0885a 90%,#2e2a26 91%,#3a3430 100%)">
  <svg class="a" style="left:0;top:110px" width="112" height="22" viewBox="0 0 112 22"><rect width="112" height="22" fill="#a07a50"/><path d="M-5 0 L15 0 L12 21 L-8 21 Z" fill="#c89c68"/><path d="M15 0 L12 21" stroke="#4a3422" stroke-width="1.6"/><path d="M17 0 L39 0 L36 21 L14 21 Z" fill="#d0a472"/><path d="M39 0 L36 21" stroke="#4a3422" stroke-width="1.6"/><path d="M41 0 L63 0 L60 21 L38 21 Z" fill="#c49866"/><path d="M63 0 L60 21" stroke="#4a3422" stroke-width="1.6"/><path d="M65 0 L87 0 L84 21 L62 21 Z" fill="#cca06c"/><path d="M87 0 L84 21" stroke="#4a3422" stroke-width="1.6"/><path d="M89 0 L111 0 L108 21 L86 21 Z" fill="#be9262"/><path d="M111 0 L108 21" stroke="#4a3422" stroke-width="1.6"/><rect y="8" width="112" height="1.2" fill="#7a5a3a" opacity=".5"/><rect y="18" width="112" height="4" fill="#4a3a2c"/></svg>
  <div class="a" style="left:0;top:130px;width:112px;height:14px;background:linear-gradient(#5e544a,#4a4038)"></div>
  <svg class="a" style="left:0;top:0" width="112" height="143.8"><ellipse cx="90.6" cy="133.6" rx="0.41" ry="0.31" fill="#2a2420" opacity=".8"/><ellipse cx="42.9" cy="140.7" rx="0.55" ry="0.43" fill="#a89888" opacity=".8"/><ellipse cx="37.9" cy="131.8" rx="0.61" ry="0.47" fill="#a89888" opacity=".8"/><ellipse cx="14.1" cy="137.5" rx="0.88" ry="0.68" fill="#5a4e44" opacity=".8"/><ellipse cx="10.4" cy="142.7" rx="0.69" ry="0.53" fill="#2a2420" opacity=".8"/><ellipse cx="48.4" cy="135.1" rx="1.03" ry="0.79" fill="#8a7a68" opacity=".8"/><ellipse cx="14.3" cy="136.5" rx="0.99" ry="0.76" fill="#2a2420" opacity=".8"/><ellipse cx="108.4" cy="137.4" rx="0.45" ry="0.34" fill="#2a2420" opacity=".8"/><ellipse cx="108.9" cy="134.2" rx="0.48" ry="0.37" fill="#5a4e44" opacity=".8"/><ellipse cx="17.0" cy="143.6" rx="0.47" ry="0.37" fill="#2a2420" opacity=".8"/><ellipse cx="9.5" cy="141.1" rx="0.39" ry="0.30" fill="#5a4e44" opacity=".8"/><ellipse cx="26.0" cy="143.0" rx="0.89" ry="0.69" fill="#a89888" opacity=".8"/><ellipse cx="107.8" cy="139.1" rx="0.80" ry="0.62" fill="#2a2420" opacity=".8"/><ellipse cx="78.2" cy="132.5" rx="0.44" ry="0.34" fill="#5a4e44" opacity=".8"/><ellipse cx="43.5" cy="133.9" rx="0.86" ry="0.66" fill="#8a7a68" opacity=".8"/><ellipse cx="60.2" cy="144.0" rx="0.61" ry="0.47" fill="#a89888" opacity=".8"/><ellipse cx="72.2" cy="142.5" rx="0.76" ry="0.59" fill="#5a4e44" opacity=".8"/><ellipse cx="61.3" cy="131.4" rx="0.71" ry="0.55" fill="#a89888" opacity=".8"/><ellipse cx="6.2" cy="133.5" rx="1.08" ry="0.83" fill="#2a2420" opacity=".8"/><ellipse cx="9.1" cy="134.0" rx="0.72" ry="0.55" fill="#a89888" opacity=".8"/><ellipse cx="25.4" cy="131.4" rx="0.65" ry="0.50" fill="#2a2420" opacity=".8"/><ellipse cx="40.6" cy="136.2" rx="0.40" ry="0.30" fill="#a89888" opacity=".8"/><ellipse cx="82.8" cy="137.6" rx="0.55" ry="0.42" fill="#5a4e44" opacity=".8"/><ellipse cx="34.9" cy="141.7" rx="0.57" ry="0.44" fill="#5a4e44" opacity=".8"/><ellipse cx="29.7" cy="142.6" rx="0.48" ry="0.37" fill="#2a2420" opacity=".8"/><ellipse cx="68.3" cy="142.7" rx="0.77" ry="0.59" fill="#8a7a68" opacity=".8"/><ellipse cx="106.3" cy="132.9" rx="0.70" ry="0.54" fill="#5a4e44" opacity=".8"/><ellipse cx="2.6" cy="138.7" rx="0.71" ry="0.55" fill="#8a7a68" opacity=".8"/><ellipse cx="20.6" cy="136.8" rx="0.95" ry="0.73" fill="#a89888" opacity=".8"/><ellipse cx="82.1" cy="144.0" rx="1.12" ry="0.86" fill="#a89888" opacity=".8"/><ellipse cx="21.4" cy="139.5" rx="0.80" ry="0.61" fill="#2a2420" opacity=".8"/><ellipse cx="3.6" cy="139.6" rx="0.69" ry="0.53" fill="#a89888" opacity=".8"/><ellipse cx="110.3" cy="136.8" rx="0.47" ry="0.37" fill="#8a7a68" opacity=".8"/><ellipse cx="31.3" cy="135.6" rx="1.14" ry="0.87" fill="#8a7a68" opacity=".8"/><ellipse cx="62.8" cy="140.9" rx="0.69" ry="0.53" fill="#a89888" opacity=".8"/><ellipse cx="92.1" cy="136.6" rx="0.43" ry="0.33" fill="#2a2420" opacity=".8"/><ellipse cx="21.9" cy="138.0" rx="0.74" ry="0.57" fill="#a89888" opacity=".8"/><ellipse cx="40.8" cy="142.7" rx="0.41" ry="0.32" fill="#2a2420" opacity=".8"/><ellipse cx="27.8" cy="139.1" rx="0.71" ry="0.54" fill="#2a2420" opacity=".8"/><ellipse cx="3.9" cy="131.8" rx="1.11" ry="0.85" fill="#a89888" opacity=".8"/><ellipse cx="21.8" cy="131.8" rx="0.86" ry="0.66" fill="#a89888" opacity=".8"/><ellipse cx="30.5" cy="143.4" rx="0.87" ry="0.67" fill="#a89888" opacity=".8"/><ellipse cx="83.6" cy="140.0" rx="1.11" ry="0.85" fill="#a89888" opacity=".8"/><ellipse cx="0.4" cy="140.8" rx="1.10" ry="0.85" fill="#8a7a68" opacity=".8"/><ellipse cx="2.7" cy="134.0" rx="0.76" ry="0.59" fill="#2a2420" opacity=".8"/><ellipse cx="106.8" cy="136.0" rx="0.59" ry="0.45" fill="#2a2420" opacity=".8"/><ellipse cx="91.3" cy="132.7" rx="0.78" ry="0.60" fill="#8a7a68" opacity=".8"/><ellipse cx="89.9" cy="140.6" rx="1.03" ry="0.79" fill="#5a4e44" opacity=".8"/><ellipse cx="68.0" cy="135.3" rx="0.64" ry="0.49" fill="#a89888" opacity=".8"/><ellipse cx="87.8" cy="138.7" rx="0.79" ry="0.61" fill="#2a2420" opacity=".8"/><ellipse cx="84.3" cy="134.2" rx="0.44" ry="0.34" fill="#8a7a68" opacity=".8"/><ellipse cx="53.9" cy="138.1" rx="0.52" ry="0.40" fill="#2a2420" opacity=".8"/><ellipse cx="98.9" cy="143.8" rx="0.60" ry="0.46" fill="#8a7a68" opacity=".8"/><ellipse cx="23.3" cy="136.5" rx="1.16" ry="0.89" fill="#2a2420" opacity=".8"/><ellipse cx="19.4" cy="132.7" rx="0.75" ry="0.58" fill="#5a4e44" opacity=".8"/><ellipse cx="83.8" cy="142.0" rx="0.91" ry="0.70" fill="#8a7a68" opacity=".8"/><ellipse cx="87.3" cy="134.8" rx="0.61" ry="0.47" fill="#a89888" opacity=".8"/><ellipse cx="41.8" cy="140.6" rx="0.55" ry="0.42" fill="#5a4e44" opacity=".8"/><ellipse cx="20.8" cy="134.1" rx="0.61" ry="0.47" fill="#5a4e44" opacity=".8"/><ellipse cx="36.5" cy="136.1" rx="1.16" ry="0.90" fill="#5a4e44" opacity=".8"/><ellipse cx="72.8" cy="132.3" rx="0.75" ry="0.58" fill="#8a7a68" opacity=".8"/><ellipse cx="11.5" cy="137.2" rx="1.03" ry="0.79" fill="#2a2420" opacity=".8"/><ellipse cx="102.4" cy="131.5" rx="0.62" ry="0.48" fill="#8a7a68" opacity=".8"/><ellipse cx="5.6" cy="138.8" rx="1.04" ry="0.80" fill="#5a4e44" opacity=".8"/><ellipse cx="104.2" cy="135.8" rx="1.07" ry="0.82" fill="#2a2420" opacity=".8"/><ellipse cx="67.5" cy="141.1" rx="0.91" ry="0.70" fill="#8a7a68" opacity=".8"/><ellipse cx="11.8" cy="138.7" rx="0.87" ry="0.67" fill="#5a4e44" opacity=".8"/><ellipse cx="4.2" cy="135.4" rx="0.42" ry="0.33" fill="#a89888" opacity=".8"/><ellipse cx="4.3" cy="140.5" rx="1.10" ry="0.85" fill="#8a7a68" opacity=".8"/><ellipse cx="91.7" cy="136.3" rx="0.68" ry="0.52" fill="#a89888" opacity=".8"/><ellipse cx="8.7" cy="131.4" rx="0.78" ry="0.60" fill="#2a2420" opacity=".8"/><ellipse cx="7.1" cy="132.3" rx="0.70" ry="0.54" fill="#5a4e44" opacity=".8"/><ellipse cx="71.6" cy="132.2" rx="0.52" ry="0.40" fill="#a89888" opacity=".8"/><ellipse cx="45.9" cy="134.7" rx="0.63" ry="0.48" fill="#8a7a68" opacity=".8"/><ellipse cx="35.0" cy="138.4" rx="0.67" ry="0.51" fill="#2a2420" opacity=".8"/><ellipse cx="2.0" cy="141.0" rx="1.02" ry="0.78" fill="#5a4e44" opacity=".8"/><ellipse cx="43.8" cy="136.3" rx="1.12" ry="0.87" fill="#2a2420" opacity=".8"/><ellipse cx="101.0" cy="136.5" rx="1.03" ry="0.79" fill="#2a2420" opacity=".8"/><ellipse cx="64.7" cy="135.7" rx="0.99" ry="0.76" fill="#5a4e44" opacity=".8"/><ellipse cx="1.7" cy="138.2" rx="0.89" ry="0.68" fill="#2a2420" opacity=".8"/><ellipse cx="10.0" cy="139.1" rx="0.68" ry="0.52" fill="#5a4e44" opacity=".8"/><ellipse cx="16.3" cy="134.7" rx="0.80" ry="0.61" fill="#8a7a68" opacity=".8"/><ellipse cx="12.2" cy="137.4" rx="1.02" ry="0.78" fill="#5a4e44" opacity=".8"/><ellipse cx="33.8" cy="141.9" rx="0.42" ry="0.33" fill="#2a2420" opacity=".8"/><ellipse cx="35.2" cy="138.9" rx="0.89" ry="0.68" fill="#8a7a68" opacity=".8"/><ellipse cx="101.3" cy="139.1" rx="1.03" ry="0.79" fill="#5a4e44" opacity=".8"/><ellipse cx="71.7" cy="142.1" rx="0.87" ry="0.67" fill="#5a4e44" opacity=".8"/><ellipse cx="92.9" cy="133.4" rx="0.56" ry="0.43" fill="#2a2420" opacity=".8"/><ellipse cx="105.1" cy="133.0" rx="0.67" ry="0.52" fill="#5a4e44" opacity=".8"/><ellipse cx="27.7" cy="140.4" rx="1.09" ry="0.84" fill="#8a7a68" opacity=".8"/><ellipse cx="99.0" cy="142.0" rx="0.91" ry="0.70" fill="#a89888" opacity=".8"/><ellipse cx="13.2" cy="138.8" rx="0.82" ry="0.63" fill="#a89888" opacity=".8"/><ellipse cx="72.7" cy="135.0" rx="0.58" ry="0.45" fill="#2a2420" opacity=".8"/><ellipse cx="73.8" cy="136.8" rx="0.73" ry="0.56" fill="#8a7a68" opacity=".8"/><ellipse cx="0.4" cy="143.8" rx="0.75" ry="0.58" fill="#2a2420" opacity=".8"/><ellipse cx="85.5" cy="141.1" rx="0.75" ry="0.57" fill="#5a4e44" opacity=".8"/><ellipse cx="90.8" cy="136.2" rx="0.44" ry="0.34" fill="#a89888" opacity=".8"/><ellipse cx="48.2" cy="132.2" rx="0.73" ry="0.57" fill="#8a7a68" opacity=".8"/><ellipse cx="4.6" cy="132.7" rx="1.11" ry="0.85" fill="#a89888" opacity=".8"/><ellipse cx="87.1" cy="137.6" rx="0.43" ry="0.33" fill="#2a2420" opacity=".8"/><ellipse cx="73.1" cy="141.2" rx="0.41" ry="0.32" fill="#8a7a68" opacity=".8"/><ellipse cx="111.6" cy="140.5" rx="1.03" ry="0.79" fill="#5a4e44" opacity=".8"/><ellipse cx="14.7" cy="142.5" rx="0.61" ry="0.47" fill="#5a4e44" opacity=".8"/><ellipse cx="76.8" cy="140.4" rx="0.56" ry="0.43" fill="#a89888" opacity=".8"/><ellipse cx="68.4" cy="134.3" rx="0.64" ry="0.49" fill="#a89888" opacity=".8"/><ellipse cx="101.4" cy="136.9" rx="0.59" ry="0.45" fill="#2a2420" opacity=".8"/><ellipse cx="23.3" cy="134.4" rx="0.78" ry="0.60" fill="#a89888" opacity=".8"/><ellipse cx="41.7" cy="133.6" rx="0.70" ry="0.54" fill="#a89888" opacity=".8"/><ellipse cx="76.1" cy="142.6" rx="0.52" ry="0.40" fill="#a89888" opacity=".8"/><ellipse cx="12.9" cy="137.9" rx="0.89" ry="0.68" fill="#a89888" opacity=".8"/><ellipse cx="108.2" cy="136.9" rx="0.80" ry="0.61" fill="#8a7a68" opacity=".8"/><ellipse cx="28.2" cy="138.0" rx="1.06" ry="0.81" fill="#a89888" opacity=".8"/><ellipse cx="29.7" cy="143.9" rx="0.84" ry="0.65" fill="#a89888" opacity=".8"/><ellipse cx="37.1" cy="132.1" rx="0.57" ry="0.44" fill="#8a7a68" opacity=".8"/><ellipse cx="33.2" cy="137.7" rx="0.63" ry="0.49" fill="#a89888" opacity=".8"/><ellipse cx="82.1" cy="140.7" rx="0.56" ry="0.43" fill="#a89888" opacity=".8"/><ellipse cx="69.0" cy="136.6" rx="0.79" ry="0.61" fill="#8a7a68" opacity=".8"/><ellipse cx="14.8" cy="134.0" rx="0.90" ry="0.69" fill="#8a7a68" opacity=".8"/><ellipse cx="6.1" cy="138.4" rx="0.63" ry="0.48" fill="#a89888" opacity=".8"/><ellipse cx="59.8" cy="136.4" rx="0.62" ry="0.48" fill="#5a4e44" opacity=".8"/><ellipse cx="22.9" cy="139.1" rx="0.76" ry="0.58" fill="#5a4e44" opacity=".8"/><ellipse cx="1.6" cy="141.4" rx="0.94" ry="0.72" fill="#2a2420" opacity=".8"/><ellipse cx="10.7" cy="139.3" rx="1.07" ry="0.82" fill="#a89888" opacity=".8"/><ellipse cx="45.0" cy="134.4" rx="0.40" ry="0.31" fill="#a89888" opacity=".8"/><ellipse cx="66.6" cy="138.5" rx="0.86" ry="0.66" fill="#2a2420" opacity=".8"/><ellipse cx="27.8" cy="142.7" rx="0.42" ry="0.33" fill="#8a7a68" opacity=".8"/><ellipse cx="45.5" cy="134.1" rx="0.44" ry="0.34" fill="#8a7a68" opacity=".8"/><ellipse cx="1.4" cy="138.2" rx="1.12" ry="0.86" fill="#5a4e44" opacity=".8"/><ellipse cx="46.3" cy="137.7" rx="0.89" ry="0.69" fill="#2a2420" opacity=".8"/><ellipse cx="91.1" cy="133.3" rx="0.63" ry="0.49" fill="#a89888" opacity=".8"/><ellipse cx="70.1" cy="143.9" rx="0.95" ry="0.73" fill="#2a2420" opacity=".8"/><ellipse cx="80.1" cy="131.1" rx="1.05" ry="0.81" fill="#2a2420" opacity=".8"/><ellipse cx="9.0" cy="139.5" rx="0.53" ry="0.41" fill="#8a7a68" opacity=".8"/><ellipse cx="29.3" cy="139.4" rx="0.49" ry="0.37" fill="#a89888" opacity=".8"/><ellipse cx="79.7" cy="134.5" rx="0.82" ry="0.63" fill="#2a2420" opacity=".8"/><ellipse cx="76.8" cy="142.9" rx="1.15" ry="0.88" fill="#a89888" opacity=".8"/><ellipse cx="71.9" cy="143.5" rx="0.56" ry="0.43" fill="#8a7a68" opacity=".8"/><ellipse cx="19.0" cy="142.8" rx="1.05" ry="0.81" fill="#5a4e44" opacity=".8"/><ellipse cx="105.8" cy="140.7" rx="0.64" ry="0.50" fill="#2a2420" opacity=".8"/><ellipse cx="36.8" cy="134.1" rx="1.10" ry="0.84" fill="#2a2420" opacity=".8"/></svg>
</div>
<svg class="a" style="left:431.3px;top:266.5px" width="228.5" height="133.2" viewBox="0 0 228.5 133.2"><defs><linearGradient id="sky" x1="0" y1="0" x2="0" y2="1"><stop offset="0" stop-color="#d7e1e2"/><stop offset="0.5" stop-color="#dbe3e3"/><stop offset="0.52" stop-color="#d4dad8"/><stop offset="0.6" stop-color="#dedcd5"/><stop offset="1" stop-color="#e2dfd8"/></linearGradient></defs><rect width="228.5" height="133.2" fill="url(#sky)"/><ellipse cx="8.7" cy="23.5" rx="12" ry="3" fill="#e6ecec"/><ellipse cx="53.7" cy="29.5" rx="8" ry="2" fill="#e6ecec"/><ellipse cx="88.7" cy="20.5" rx="10" ry="2.5" fill="#e6ecec"/><ellipse cx="168.7" cy="15.5" rx="9" ry="2" fill="#e6ecec"/><rect x="-0.3" y="58.5" width="11.0" height="11.0" fill="#c4cccc"/><rect x="10.7" y="52.5" width="26.0" height="15.0" fill="#a3adb0"/><rect x="42.7" y="46.5" width="8.0" height="21.0" fill="#e4e6e2"/><rect x="68.7" y="55.5" width="10.0" height="13.0" fill="#c9d0cf"/><rect x="142.7" y="38.5" width="18.0" height="27.0" fill="#e6e7e2"/><rect x="160.7" y="45.5" width="20.0" height="21.0" fill="#cfd5d4"/><rect x="198.7" y="33.5" width="18.0" height="33.0" fill="#dfe2de"/><rect x="180.7" y="51.5" width="16.0" height="15.0" fill="#c8cfcf"/><path d="M109.7 14.5 Q110.9 40.5 110.3 66.5" stroke="#a2b1b1" stroke-width="1.4" fill="none"/><path d="M109.7 14.5 Q105.3 12.9 101.7 17.5" stroke="#a2b1b1" stroke-width="1.5" fill="none" stroke-linecap="round"/><path d="M109.7 14.5 Q106.6 10.5 104.0 13.6" stroke="#a2b1b1" stroke-width="1.5" fill="none" stroke-linecap="round"/><path d="M109.7 14.5 Q108.6 9.4 107.8 11.9" stroke="#a2b1b1" stroke-width="1.5" fill="none" stroke-linecap="round"/><path d="M109.7 14.5 Q111.5 9.6 112.9 12.2" stroke="#a2b1b1" stroke-width="1.5" fill="none" stroke-linecap="round"/><path d="M109.7 14.5 Q113.4 11.2 116.5 14.7" stroke="#a2b1b1" stroke-width="1.5" fill="none" stroke-linecap="round"/><path d="M109.7 14.5 Q114.1 12.8 117.6 17.3" stroke="#a2b1b1" stroke-width="1.5" fill="none" stroke-linecap="round"/><path d="M109.7 14.5 Q113.6 15.1 116.9 20.9" stroke="#a2b1b1" stroke-width="1.5" fill="none" stroke-linecap="round"/><path d="M109.7 14.5 Q111.0 17.1 112.0 24.2" stroke="#a2b1b1" stroke-width="1.5" fill="none" stroke-linecap="round"/><path d="M109.7 14.5 Q109.1 17.3 108.6 24.4" stroke="#a2b1b1" stroke-width="1.5" fill="none" stroke-linecap="round"/><path d="M109.7 14.5 Q106.8 16.3 104.4 22.9" stroke="#a2b1b1" stroke-width="1.5" fill="none" stroke-linecap="round"/><path d="M109.7 14.5 Q105.3 13.4 101.7 18.3" stroke="#a2b1b1" stroke-width="1.5" fill="none" stroke-linecap="round"/><ellipse cx="109.7" cy="15.0" rx="4.0" ry="2.8" fill="#a2b1b1"/><path d="M115.3 17.5 Q116.5 42.5 115.9 67.5" stroke="#a2b1b1" stroke-width="1.4" fill="none"/><path d="M115.3 17.5 Q111.5 15.9 108.4 19.7" stroke="#a2b1b1" stroke-width="1.5" fill="none" stroke-linecap="round"/><path d="M115.3 17.5 Q112.8 13.8 110.7 16.4" stroke="#a2b1b1" stroke-width="1.5" fill="none" stroke-linecap="round"/><path d="M115.3 17.5 Q114.5 13.0 113.8 15.2" stroke="#a2b1b1" stroke-width="1.5" fill="none" stroke-linecap="round"/><path d="M115.3 17.5 Q116.9 13.3 118.2 15.5" stroke="#a2b1b1" stroke-width="1.5" fill="none" stroke-linecap="round"/><path d="M115.3 17.5 Q118.3 14.2 120.7 17.1" stroke="#a2b1b1" stroke-width="1.5" fill="none" stroke-linecap="round"/><path d="M115.3 17.5 Q119.1 16.6 122.3 20.9" stroke="#a2b1b1" stroke-width="1.5" fill="none" stroke-linecap="round"/><path d="M115.3 17.5 Q118.3 18.7 120.7 24.2" stroke="#a2b1b1" stroke-width="1.5" fill="none" stroke-linecap="round"/><path d="M115.3 17.5 Q116.7 19.7 117.9 25.9" stroke="#a2b1b1" stroke-width="1.5" fill="none" stroke-linecap="round"/><path d="M115.3 17.5 Q114.2 19.8 113.4 26.0" stroke="#a2b1b1" stroke-width="1.5" fill="none" stroke-linecap="round"/><path d="M115.3 17.5 Q112.4 18.8 110.0 24.3" stroke="#a2b1b1" stroke-width="1.5" fill="none" stroke-linecap="round"/><path d="M115.3 17.5 Q111.6 17.5 108.6 22.3" stroke="#a2b1b1" stroke-width="1.5" fill="none" stroke-linecap="round"/><ellipse cx="115.3" cy="18.0" rx="3.5" ry="2.4" fill="#a2b1b1"/><path d="M138.3 20.5 Q139.5 43.5 138.9 66.5" stroke="#a2b1b1" stroke-width="1.4" fill="none"/><path d="M138.3 20.5 Q133.5 18.1 129.6 22.8" stroke="#a2b1b1" stroke-width="1.5" fill="none" stroke-linecap="round"/><path d="M138.3 20.5 Q134.8 15.9 132.0 19.4" stroke="#a2b1b1" stroke-width="1.5" fill="none" stroke-linecap="round"/><path d="M138.3 20.5 Q137.0 14.8 135.9 17.6" stroke="#a2b1b1" stroke-width="1.5" fill="none" stroke-linecap="round"/><path d="M138.3 20.5 Q139.5 14.8 140.6 17.6" stroke="#a2b1b1" stroke-width="1.5" fill="none" stroke-linecap="round"/><path d="M138.3 20.5 Q142.7 17.0 146.2 21.2" stroke="#a2b1b1" stroke-width="1.5" fill="none" stroke-linecap="round"/><path d="M138.3 20.5 Q143.2 19.1 147.3 24.5" stroke="#a2b1b1" stroke-width="1.5" fill="none" stroke-linecap="round"/><path d="M138.3 20.5 Q142.2 21.9 145.4 28.9" stroke="#a2b1b1" stroke-width="1.5" fill="none" stroke-linecap="round"/><path d="M138.3 20.5 Q139.7 23.5 140.8 31.5" stroke="#a2b1b1" stroke-width="1.5" fill="none" stroke-linecap="round"/><path d="M138.3 20.5 Q137.0 23.5 135.9 31.5" stroke="#a2b1b1" stroke-width="1.5" fill="none" stroke-linecap="round"/><path d="M138.3 20.5 Q134.4 21.9 131.1 28.9" stroke="#a2b1b1" stroke-width="1.5" fill="none" stroke-linecap="round"/><path d="M138.3 20.5 Q133.5 20.1 129.5 26.0" stroke="#a2b1b1" stroke-width="1.5" fill="none" stroke-linecap="round"/><ellipse cx="138.3" cy="21.0" rx="4.5" ry="3.1" fill="#a2b1b1"/><path d="M163.1 15.5 Q164.3 40.5 163.7 65.5" stroke="#a2b1b1" stroke-width="1.4" fill="none"/><path d="M163.1 15.5 Q158.3 13.0 154.4 17.7" stroke="#a2b1b1" stroke-width="1.5" fill="none" stroke-linecap="round"/><path d="M163.1 15.5 Q159.5 11.1 156.5 14.6" stroke="#a2b1b1" stroke-width="1.5" fill="none" stroke-linecap="round"/><path d="M163.1 15.5 Q162.7 9.7 162.3 12.4" stroke="#a2b1b1" stroke-width="1.5" fill="none" stroke-linecap="round"/><path d="M163.1 15.5 Q165.4 10.2 167.3 13.2" stroke="#a2b1b1" stroke-width="1.5" fill="none" stroke-linecap="round"/><path d="M163.1 15.5 Q166.9 11.2 169.9 14.9" stroke="#a2b1b1" stroke-width="1.5" fill="none" stroke-linecap="round"/><path d="M163.1 15.5 Q168.0 13.7 172.1 18.8" stroke="#a2b1b1" stroke-width="1.5" fill="none" stroke-linecap="round"/><path d="M163.1 15.5 Q167.4 16.4 170.9 23.1" stroke="#a2b1b1" stroke-width="1.5" fill="none" stroke-linecap="round"/><path d="M163.1 15.5 Q164.3 18.5 165.4 26.5" stroke="#a2b1b1" stroke-width="1.5" fill="none" stroke-linecap="round"/><path d="M163.1 15.5 Q162.2 18.6 161.4 26.6" stroke="#a2b1b1" stroke-width="1.5" fill="none" stroke-linecap="round"/><path d="M163.1 15.5 Q159.4 17.2 156.4 24.4" stroke="#a2b1b1" stroke-width="1.5" fill="none" stroke-linecap="round"/><path d="M163.1 15.5 Q158.3 15.2 154.3 21.2" stroke="#a2b1b1" stroke-width="1.5" fill="none" stroke-linecap="round"/><ellipse cx="163.1" cy="16.0" rx="4.5" ry="3.1" fill="#a2b1b1"/><path d="M180.2 23.5 Q181.4 44.5 180.8 65.5" stroke="#a2b1b1" stroke-width="1.4" fill="none"/><path d="M180.2 23.5 Q175.9 21.6 172.3 26.0" stroke="#a2b1b1" stroke-width="1.5" fill="none" stroke-linecap="round"/><path d="M180.2 23.5 Q176.9 19.6 174.3 22.8" stroke="#a2b1b1" stroke-width="1.5" fill="none" stroke-linecap="round"/><path d="M180.2 23.5 Q179.1 18.4 178.2 20.9" stroke="#a2b1b1" stroke-width="1.5" fill="none" stroke-linecap="round"/><path d="M180.2 23.5 Q181.9 18.6 183.4 21.2" stroke="#a2b1b1" stroke-width="1.5" fill="none" stroke-linecap="round"/><path d="M180.2 23.5 Q183.9 20.1 186.9 23.6" stroke="#a2b1b1" stroke-width="1.5" fill="none" stroke-linecap="round"/><path d="M180.2 23.5 Q184.6 22.8 188.1 27.8" stroke="#a2b1b1" stroke-width="1.5" fill="none" stroke-linecap="round"/><path d="M180.2 23.5 Q183.7 24.7 186.6 30.9" stroke="#a2b1b1" stroke-width="1.5" fill="none" stroke-linecap="round"/><path d="M180.2 23.5 Q181.3 26.2 182.3 33.3" stroke="#a2b1b1" stroke-width="1.5" fill="none" stroke-linecap="round"/><path d="M180.2 23.5 Q178.9 26.1 177.8 33.2" stroke="#a2b1b1" stroke-width="1.5" fill="none" stroke-linecap="round"/><path d="M180.2 23.5 Q176.6 24.7 173.7 30.9" stroke="#a2b1b1" stroke-width="1.5" fill="none" stroke-linecap="round"/><path d="M180.2 23.5 Q175.8 22.8 172.3 27.9" stroke="#a2b1b1" stroke-width="1.5" fill="none" stroke-linecap="round"/><ellipse cx="180.2" cy="24.0" rx="4.0" ry="2.8" fill="#a2b1b1"/><path d="M201.7 21.5 Q202.9 43.5 202.3 65.5" stroke="#a2b1b1" stroke-width="1.4" fill="none"/><path d="M201.7 21.5 Q196.8 19.8 192.7 25.0" stroke="#a2b1b1" stroke-width="1.5" fill="none" stroke-linecap="round"/><path d="M201.7 21.5 Q198.5 16.7 195.9 20.1" stroke="#a2b1b1" stroke-width="1.5" fill="none" stroke-linecap="round"/><path d="M201.7 21.5 Q201.3 15.7 201.0 18.4" stroke="#a2b1b1" stroke-width="1.5" fill="none" stroke-linecap="round"/><path d="M201.7 21.5 Q204.1 16.2 206.0 19.2" stroke="#a2b1b1" stroke-width="1.5" fill="none" stroke-linecap="round"/><path d="M201.7 21.5 Q205.9 17.7 209.3 21.6" stroke="#a2b1b1" stroke-width="1.5" fill="none" stroke-linecap="round"/><path d="M201.7 21.5 Q206.6 20.4 210.7 26.0" stroke="#a2b1b1" stroke-width="1.5" fill="none" stroke-linecap="round"/><path d="M201.7 21.5 Q206.0 22.4 209.5 29.1" stroke="#a2b1b1" stroke-width="1.5" fill="none" stroke-linecap="round"/><path d="M201.7 21.5 Q203.1 24.5 204.3 32.4" stroke="#a2b1b1" stroke-width="1.5" fill="none" stroke-linecap="round"/><path d="M201.7 21.5 Q200.6 24.5 199.6 32.6" stroke="#a2b1b1" stroke-width="1.5" fill="none" stroke-linecap="round"/><path d="M201.7 21.5 Q198.4 23.5 195.6 30.9" stroke="#a2b1b1" stroke-width="1.5" fill="none" stroke-linecap="round"/><path d="M201.7 21.5 Q197.0 21.5 193.1 27.7" stroke="#a2b1b1" stroke-width="1.5" fill="none" stroke-linecap="round"/><ellipse cx="201.7" cy="22.0" rx="4.5" ry="3.1" fill="#a2b1b1"/><path d="M210.1 24.5 Q211.3 45.5 210.7 66.5" stroke="#a2b1b1" stroke-width="1.4" fill="none"/><path d="M210.1 24.5 Q206.4 22.5 203.4 26.1" stroke="#a2b1b1" stroke-width="1.5" fill="none" stroke-linecap="round"/><path d="M210.1 24.5 Q207.7 20.7 205.8 23.2" stroke="#a2b1b1" stroke-width="1.5" fill="none" stroke-linecap="round"/><path d="M210.1 24.5 Q208.9 20.1 207.9 22.3" stroke="#a2b1b1" stroke-width="1.5" fill="none" stroke-linecap="round"/><path d="M210.1 24.5 Q211.8 20.3 213.3 22.7" stroke="#a2b1b1" stroke-width="1.5" fill="none" stroke-linecap="round"/><path d="M210.1 24.5 Q213.2 21.4 215.8 24.4" stroke="#a2b1b1" stroke-width="1.5" fill="none" stroke-linecap="round"/><path d="M210.1 24.5 Q213.9 23.1 217.1 27.1" stroke="#a2b1b1" stroke-width="1.5" fill="none" stroke-linecap="round"/><path d="M210.1 24.5 Q213.4 25.2 216.1 30.5" stroke="#a2b1b1" stroke-width="1.5" fill="none" stroke-linecap="round"/><path d="M210.1 24.5 Q211.3 26.8 212.2 33.0" stroke="#a2b1b1" stroke-width="1.5" fill="none" stroke-linecap="round"/><path d="M210.1 24.5 Q208.9 26.8 207.9 33.0" stroke="#a2b1b1" stroke-width="1.5" fill="none" stroke-linecap="round"/><path d="M210.1 24.5 Q207.7 26.2 205.7 32.0" stroke="#a2b1b1" stroke-width="1.5" fill="none" stroke-linecap="round"/><path d="M210.1 24.5 Q206.3 23.9 203.2 28.4" stroke="#a2b1b1" stroke-width="1.5" fill="none" stroke-linecap="round"/><ellipse cx="210.1" cy="25.0" rx="3.5" ry="2.4" fill="#a2b1b1"/><path d="M224.7 19.5 Q225.9 42.5 225.3 65.5" stroke="#a2b1b1" stroke-width="1.4" fill="none"/><path d="M224.7 19.5 Q220.9 18.3 217.7 22.4" stroke="#a2b1b1" stroke-width="1.5" fill="none" stroke-linecap="round"/><path d="M224.7 19.5 Q222.1 15.9 220.0 18.5" stroke="#a2b1b1" stroke-width="1.5" fill="none" stroke-linecap="round"/><path d="M224.7 19.5 Q223.7 15.1 222.9 17.2" stroke="#a2b1b1" stroke-width="1.5" fill="none" stroke-linecap="round"/><path d="M224.7 19.5 Q226.5 15.4 228.0 17.7" stroke="#a2b1b1" stroke-width="1.5" fill="none" stroke-linecap="round"/><path d="M224.7 19.5 Q228.2 16.9 231.0 20.2" stroke="#a2b1b1" stroke-width="1.5" fill="none" stroke-linecap="round"/><path d="M224.7 19.5 Q228.5 18.5 231.7 22.7" stroke="#a2b1b1" stroke-width="1.5" fill="none" stroke-linecap="round"/><path d="M224.7 19.5 Q227.6 20.8 229.9 26.4" stroke="#a2b1b1" stroke-width="1.5" fill="none" stroke-linecap="round"/><path d="M224.7 19.5 Q226.3 21.6 227.7 27.7" stroke="#a2b1b1" stroke-width="1.5" fill="none" stroke-linecap="round"/><path d="M224.7 19.5 Q224.3 21.9 224.1 28.2" stroke="#a2b1b1" stroke-width="1.5" fill="none" stroke-linecap="round"/><path d="M224.7 19.5 Q221.9 20.8 219.5 26.4" stroke="#a2b1b1" stroke-width="1.5" fill="none" stroke-linecap="round"/><path d="M224.7 19.5 Q221.0 19.5 218.0 24.3" stroke="#a2b1b1" stroke-width="1.5" fill="none" stroke-linecap="round"/><ellipse cx="224.7" cy="20.0" rx="3.5" ry="2.4" fill="#a2b1b1"/><path d="M126.4 41.5 Q127.6 54.0 127.0 66.5" stroke="#a2b1b1" stroke-width="1.4" fill="none"/><path d="M126.4 41.5 Q123.7 40.5 121.4 43.4" stroke="#a2b1b1" stroke-width="1.5" fill="none" stroke-linecap="round"/><path d="M126.4 41.5 Q124.4 39.1 122.7 41.0" stroke="#a2b1b1" stroke-width="1.5" fill="none" stroke-linecap="round"/><path d="M126.4 41.5 Q125.9 38.3 125.5 39.8" stroke="#a2b1b1" stroke-width="1.5" fill="none" stroke-linecap="round"/><path d="M126.4 41.5 Q127.2 38.4 127.8 39.9" stroke="#a2b1b1" stroke-width="1.5" fill="none" stroke-linecap="round"/><path d="M126.4 41.5 Q128.5 39.1 130.2 41.1" stroke="#a2b1b1" stroke-width="1.5" fill="none" stroke-linecap="round"/><path d="M126.4 41.5 Q129.1 41.0 131.4 44.2" stroke="#a2b1b1" stroke-width="1.5" fill="none" stroke-linecap="round"/><path d="M126.4 41.5 Q128.8 42.0 130.7 45.8" stroke="#a2b1b1" stroke-width="1.5" fill="none" stroke-linecap="round"/><path d="M126.4 41.5 Q127.1 43.2 127.7 47.6" stroke="#a2b1b1" stroke-width="1.5" fill="none" stroke-linecap="round"/><path d="M126.4 41.5 Q125.5 43.1 124.8 47.5" stroke="#a2b1b1" stroke-width="1.5" fill="none" stroke-linecap="round"/><path d="M126.4 41.5 Q124.5 42.5 122.9 46.6" stroke="#a2b1b1" stroke-width="1.5" fill="none" stroke-linecap="round"/><path d="M126.4 41.5 Q123.7 41.2 121.5 44.5" stroke="#a2b1b1" stroke-width="1.5" fill="none" stroke-linecap="round"/><ellipse cx="126.4" cy="42.0" rx="2.5" ry="1.8" fill="#a2b1b1"/><path d="M15.7 48.5 Q16.9 56.5 16.3 64.5" stroke="#a2b1b1" stroke-width="1.4" fill="none"/><path d="M15.7 48.5 Q13.8 47.7 12.3 49.6" stroke="#a2b1b1" stroke-width="1.5" fill="none" stroke-linecap="round"/><path d="M15.7 48.5 Q14.4 46.7 13.3 48.1" stroke="#a2b1b1" stroke-width="1.5" fill="none" stroke-linecap="round"/><path d="M15.7 48.5 Q15.4 46.3 15.1 47.3" stroke="#a2b1b1" stroke-width="1.5" fill="none" stroke-linecap="round"/><path d="M15.7 48.5 Q16.5 46.4 17.1 47.5" stroke="#a2b1b1" stroke-width="1.5" fill="none" stroke-linecap="round"/><path d="M15.7 48.5 Q17.3 47.0 18.7 48.6" stroke="#a2b1b1" stroke-width="1.5" fill="none" stroke-linecap="round"/><path d="M15.7 48.5 Q17.6 48.2 19.2 50.4" stroke="#a2b1b1" stroke-width="1.5" fill="none" stroke-linecap="round"/><path d="M15.7 48.5 Q17.3 49.0 18.6 51.6" stroke="#a2b1b1" stroke-width="1.5" fill="none" stroke-linecap="round"/><path d="M15.7 48.5 Q16.5 49.6 17.1 52.7" stroke="#a2b1b1" stroke-width="1.5" fill="none" stroke-linecap="round"/><path d="M15.7 48.5 Q15.2 49.7 14.8 52.8" stroke="#a2b1b1" stroke-width="1.5" fill="none" stroke-linecap="round"/><path d="M15.7 48.5 Q14.4 49.3 13.4 52.2" stroke="#a2b1b1" stroke-width="1.5" fill="none" stroke-linecap="round"/><path d="M15.7 48.5 Q13.8 48.4 12.3 50.7" stroke="#a2b1b1" stroke-width="1.5" fill="none" stroke-linecap="round"/><ellipse cx="15.7" cy="49.0" rx="1.8" ry="1.2" fill="#a2b1b1"/><path d="M23.7 49.5 Q24.9 57.0 24.3 64.5" stroke="#a2b1b1" stroke-width="1.4" fill="none"/><path d="M23.7 49.5 Q21.9 48.4 20.4 50.2" stroke="#a2b1b1" stroke-width="1.5" fill="none" stroke-linecap="round"/><path d="M23.7 49.5 Q22.3 47.8 21.2 49.1" stroke="#a2b1b1" stroke-width="1.5" fill="none" stroke-linecap="round"/><path d="M23.7 49.5 Q23.3 47.3 23.0 48.3" stroke="#a2b1b1" stroke-width="1.5" fill="none" stroke-linecap="round"/><path d="M23.7 49.5 Q24.2 47.3 24.6 48.4" stroke="#a2b1b1" stroke-width="1.5" fill="none" stroke-linecap="round"/><path d="M23.7 49.5 Q25.3 48.0 26.6 49.5" stroke="#a2b1b1" stroke-width="1.5" fill="none" stroke-linecap="round"/><path d="M23.7 49.5 Q25.6 49.0 27.2 51.1" stroke="#a2b1b1" stroke-width="1.5" fill="none" stroke-linecap="round"/><path d="M23.7 49.5 Q25.4 49.8 26.8 52.3" stroke="#a2b1b1" stroke-width="1.5" fill="none" stroke-linecap="round"/><path d="M23.7 49.5 Q24.4 50.6 24.9 53.7" stroke="#a2b1b1" stroke-width="1.5" fill="none" stroke-linecap="round"/><path d="M23.7 49.5 Q23.2 50.7 22.8 53.8" stroke="#a2b1b1" stroke-width="1.5" fill="none" stroke-linecap="round"/><path d="M23.7 49.5 Q22.5 50.3 21.5 53.3" stroke="#a2b1b1" stroke-width="1.5" fill="none" stroke-linecap="round"/><path d="M23.7 49.5 Q21.8 49.2 20.2 51.5" stroke="#a2b1b1" stroke-width="1.5" fill="none" stroke-linecap="round"/><ellipse cx="23.7" cy="50.0" rx="1.8" ry="1.2" fill="#a2b1b1"/><path d="M55.7 44.5 Q56.9 55.5 56.3 66.5" stroke="#a2b1b1" stroke-width="1.4" fill="none"/><path d="M55.7 44.5 Q52.4 43.1 49.8 46.4" stroke="#a2b1b1" stroke-width="1.5" fill="none" stroke-linecap="round"/><path d="M55.7 44.5 Q53.4 41.4 51.6 43.7" stroke="#a2b1b1" stroke-width="1.5" fill="none" stroke-linecap="round"/><path d="M55.7 44.5 Q54.9 40.7 54.2 42.5" stroke="#a2b1b1" stroke-width="1.5" fill="none" stroke-linecap="round"/><path d="M55.7 44.5 Q57.1 40.9 58.3 42.9" stroke="#a2b1b1" stroke-width="1.5" fill="none" stroke-linecap="round"/><path d="M55.7 44.5 Q58.6 42.1 60.9 44.8" stroke="#a2b1b1" stroke-width="1.5" fill="none" stroke-linecap="round"/><path d="M55.7 44.5 Q59.0 43.2 61.6 46.6" stroke="#a2b1b1" stroke-width="1.5" fill="none" stroke-linecap="round"/><path d="M55.7 44.5 Q58.6 45.0 61.0 49.4" stroke="#a2b1b1" stroke-width="1.5" fill="none" stroke-linecap="round"/><path d="M55.7 44.5 Q56.8 46.4 57.7 51.7" stroke="#a2b1b1" stroke-width="1.5" fill="none" stroke-linecap="round"/><path d="M55.7 44.5 Q54.6 46.4 53.7 51.7" stroke="#a2b1b1" stroke-width="1.5" fill="none" stroke-linecap="round"/><path d="M55.7 44.5 Q53.5 45.8 51.7 50.8" stroke="#a2b1b1" stroke-width="1.5" fill="none" stroke-linecap="round"/><path d="M55.7 44.5 Q52.5 44.2 49.8 48.1" stroke="#a2b1b1" stroke-width="1.5" fill="none" stroke-linecap="round"/><ellipse cx="55.7" cy="45.0" rx="3.0" ry="2.1" fill="#a2b1b1"/><path d="M65.7 45.5 Q66.9 55.5 66.3 65.5" stroke="#a2b1b1" stroke-width="1.4" fill="none"/><path d="M65.7 45.5 Q63.0 44.3 60.8 47.0" stroke="#a2b1b1" stroke-width="1.5" fill="none" stroke-linecap="round"/><path d="M65.7 45.5 Q63.6 43.1 61.9 45.1" stroke="#a2b1b1" stroke-width="1.5" fill="none" stroke-linecap="round"/><path d="M65.7 45.5 Q65.0 42.3 64.5 43.9" stroke="#a2b1b1" stroke-width="1.5" fill="none" stroke-linecap="round"/><path d="M65.7 45.5 Q66.6 42.4 67.3 44.0" stroke="#a2b1b1" stroke-width="1.5" fill="none" stroke-linecap="round"/><path d="M65.7 45.5 Q67.9 43.3 69.7 45.4" stroke="#a2b1b1" stroke-width="1.5" fill="none" stroke-linecap="round"/><path d="M65.7 45.5 Q68.4 44.8 70.7 47.9" stroke="#a2b1b1" stroke-width="1.5" fill="none" stroke-linecap="round"/><path d="M65.7 45.5 Q68.1 46.0 70.0 49.8" stroke="#a2b1b1" stroke-width="1.5" fill="none" stroke-linecap="round"/><path d="M65.7 45.5 Q66.8 47.0 67.7 51.4" stroke="#a2b1b1" stroke-width="1.5" fill="none" stroke-linecap="round"/><path d="M65.7 45.5 Q64.9 47.1 64.3 51.6" stroke="#a2b1b1" stroke-width="1.5" fill="none" stroke-linecap="round"/><path d="M65.7 45.5 Q64.0 46.7 62.6 50.9" stroke="#a2b1b1" stroke-width="1.5" fill="none" stroke-linecap="round"/><path d="M65.7 45.5 Q63.0 45.1 60.8 48.4" stroke="#a2b1b1" stroke-width="1.5" fill="none" stroke-linecap="round"/><ellipse cx="65.7" cy="46.0" rx="2.5" ry="1.8" fill="#a2b1b1"/><path d="M98.7 51.5 Q99.9 59.5 99.3 67.5" stroke="#a2b1b1" stroke-width="1.4" fill="none"/><path d="M98.7 51.5 Q96.6 50.4 94.8 52.5" stroke="#a2b1b1" stroke-width="1.5" fill="none" stroke-linecap="round"/><path d="M98.7 51.5 Q97.0 49.6 95.7 51.2" stroke="#a2b1b1" stroke-width="1.5" fill="none" stroke-linecap="round"/><path d="M98.7 51.5 Q98.1 49.0 97.6 50.2" stroke="#a2b1b1" stroke-width="1.5" fill="none" stroke-linecap="round"/><path d="M98.7 51.5 Q99.7 49.1 100.5 50.4" stroke="#a2b1b1" stroke-width="1.5" fill="none" stroke-linecap="round"/><path d="M98.7 51.5 Q100.4 49.7 101.8 51.3" stroke="#a2b1b1" stroke-width="1.5" fill="none" stroke-linecap="round"/><path d="M98.7 51.5 Q100.9 50.7 102.7 53.0" stroke="#a2b1b1" stroke-width="1.5" fill="none" stroke-linecap="round"/><path d="M98.7 51.5 Q100.5 52.0 102.1 55.0" stroke="#a2b1b1" stroke-width="1.5" fill="none" stroke-linecap="round"/><path d="M98.7 51.5 Q99.4 52.8 100.0 56.3" stroke="#a2b1b1" stroke-width="1.5" fill="none" stroke-linecap="round"/><path d="M98.7 51.5 Q98.5 52.9 98.3 56.5" stroke="#a2b1b1" stroke-width="1.5" fill="none" stroke-linecap="round"/><path d="M98.7 51.5 Q97.2 52.4 96.0 55.6" stroke="#a2b1b1" stroke-width="1.5" fill="none" stroke-linecap="round"/><path d="M98.7 51.5 Q96.6 51.3 94.8 54.0" stroke="#a2b1b1" stroke-width="1.5" fill="none" stroke-linecap="round"/><ellipse cx="98.7" cy="52.0" rx="2.0" ry="1.4" fill="#a2b1b1"/><rect x="0" y="64.5" width="228.5" height="8" fill="#c3c9c8" opacity=".8"/><path d="M73.7 27.5 L79.7 26.5 L81.7 33.5 L76.7 37.5 L72.7 33.5 Z" fill="#7e8288" opacity="1"/><path d="M76.7 33.5 L84.7 32.5 L95.7 41.5 L98.7 51.5 L88.7 54.5 L79.7 45.5 Z" fill="#8c8a8e" opacity="1"/><path d="M82.7 35.5 L90.7 37.5 L95.7 45.5 L86.7 47.5 Z" fill="#a08c86" opacity="1"/><path d="M82.7 35.5 L114.7 34.5" stroke="#a9a4a0" stroke-width="2.2" stroke-linecap="round"/><path d="M86.7 51.5 L98.7 51.5 L101.7 61.5 L105.7 71.5 L99.7 72.5 L94.7 61.5 L81.7 59.5 L76.7 71.5 L70.7 71.5 L73.7 55.5 Z" fill="#8e9ca6" opacity="1"/><path d="M68.7 71.5 L108.7 70.5 L108.7 73.5 L68.7 74.5 Z" fill="#9aa6ac" opacity="1"/><path d="M-0.3 73.5 L13.7 66.5 L23.7 71.5 L23.7 81.5 L-0.3 81.5 Z" fill="#b9c2c3" opacity="1"/><path d="M-0.3 81.5 L228.7 81.5 L228.7 85.5 L-0.3 85.5 Z" fill="#e6e3dc" opacity="1"/><path d="M46.7 74.5 L124.7 74.5 L124.7 95.5 L46.7 95.5 Z" fill="#d8d6cf" opacity="1"/><path d="M53.7 78.5 L124.7 78.5 L124.7 79.4 L53.7 79.4 Z" fill="#c2c6c4" opacity="1"/><path d="M53.7 82.5 L124.7 82.5 L124.7 83.4 L53.7 83.4 Z" fill="#c2c6c4" opacity="1"/><path d="M53.7 86.5 L124.7 86.5 L124.7 87.4 L53.7 87.4 Z" fill="#c2c6c4" opacity="1"/><path d="M53.7 90.5 L124.7 90.5 L124.7 91.4 L53.7 91.4 Z" fill="#c2c6c4" opacity="1"/><path d="M113.7 70.5 L156.7 70.5 L156.7 94.5 L113.7 94.5 Z" fill="#e2dfd8" opacity="1"/><path d="M156.7 73.5 L183.7 73.5 L183.7 93.5 L156.7 93.5 Z" fill="#cdd0cc" opacity="1"/><path d="M183.7 67.5 L228.7 83.5 L228.7 97.5 L183.7 97.5 Z" fill="#e3e0d9" opacity="1"/><path d="M38.7 83.5 L98.7 83.5 L108.7 106.5 L48.7 106.5 Z" fill="#d2d2cc" opacity="1"/><path d="M-0.3 91.5 L38.7 91.5 L46.7 107.5 L-0.3 107.5 Z" fill="#e5e2db" opacity="1"/><path d="M48.7 103.5 L113.7 105.5 L113.7 108.5 L48.7 107.5 Z" fill="#b8c1c3" opacity="1"/><path d="M-0.3 107.5 L228.7 107.5 L228.7 109.5 L-0.3 109.5 Z" fill="#c4cacb" opacity="1"/><path d="M-0.3 121.5 L228.7 121.5 L228.7 123.5 L-0.3 123.5 Z" fill="#c8cdcd" opacity="1"/><rect x="168.7" y="86.5" width="60.0" height="1.0" fill="#c0cdd3"/><rect x="168.7" y="91.5" width="60.0" height="1.0" fill="#c0cdd3"/><rect x="168.7" y="96.5" width="60.0" height="1.0" fill="#c0cdd3"/><rect x="168.7" y="101.5" width="60.0" height="1.0" fill="#c0cdd3"/><rect x="168.7" y="112.5" width="60.0" height="1.0" fill="#c0cdd3"/><rect x="168.7" y="117.5" width="60.0" height="1.0" fill="#c0cdd3"/><rect x="168.7" y="127.5" width="60.0" height="1.0" fill="#c0cdd3"/><path d="M172.7 86.5 L216.7 116.5" stroke="#b0c0c8" stroke-width="1.6"/><path d="M178.7 89.5 L178.7 105.5 M194.7 100.5 L194.7 116.5" stroke="#b0c0c8" stroke-width="1.2"/><rect width="228.5" height="133.2" fill="#eeebe5" opacity=".42"/></svg>


<!-- ===== INSERT MENU ===== -->
<div class="a" style="left:119.2px;top:38.6px;width:217.4px;height:373px;background:#fff;box-shadow:0 1px 4px rgba(0,0,0,.22);border-radius:4px"></div>
<div class="a" style="left:119px;top:86.5px;width:209px;height:22px;background:#efefef"></div>
<div class="a" style="left:328.3px;top:41px;width:6.2px;height:375px;background:#d6d6d6;border-radius:3px"></div>
<div class="a" style="left:120px;top:243.1px;width:206px;height:1px;background:#e3e3e3"></div>
<div class="a" style="left:120px;top:297.0px;width:206px;height:1px;background:#e3e3e3"></div>
<div class="a" style="left:120px;top:351.7px;width:206px;height:1px;background:#e3e3e3"></div>
<div class="a" style="left:120px;top:407.1px;width:206px;height:1px;background:#e3e3e3"></div>
<div class="t" style="left:146.4px;top:49.47px;font-size:9.6px;color:#1f1f1f">Image</div>
<svg class="a" style="left:310.7px;top:51.70px" width="5" height="5.2" viewBox="0 0 10 10"><path d="M1 0l9 5-9 5z" fill="#5f6368"/></svg>
<div class="t" style="left:146.4px;top:71.07px;font-size:9.6px;color:#1f1f1f">Text box</div>
<div class="t" style="left:146.4px;top:92.67px;font-size:9.6px;color:#1f1f1f">Shape</div>
<svg class="a" style="left:310.7px;top:94.90px" width="5" height="5.2" viewBox="0 0 10 10"><path d="M1 0l9 5-9 5z" fill="#1f1f1f"/></svg>
<div class="t" style="left:146.4px;top:114.27px;font-size:9.6px;color:#1f1f1f">Building blocks</div>
<div class="t" style="left:146.4px;top:135.87px;font-size:9.6px;color:#1f1f1f">Diagram</div>
<svg class="a" style="left:310.7px;top:138.10px" width="5" height="5.2" viewBox="0 0 10 10"><path d="M1 0l9 5-9 5z" fill="#5f6368"/></svg>
<div class="t" style="left:146.4px;top:157.47px;font-size:9.6px;color:#1f1f1f">Table</div>
<svg class="a" style="left:310.7px;top:159.70px" width="5" height="5.2" viewBox="0 0 10 10"><path d="M1 0l9 5-9 5z" fill="#5f6368"/></svg>
<div class="t" style="left:146.4px;top:178.87px;font-size:9.6px;color:#1f1f1f">Chart</div>
<svg class="a" style="left:310.7px;top:181.10px" width="5" height="5.2" viewBox="0 0 10 10"><path d="M1 0l9 5-9 5z" fill="#5f6368"/></svg>
<div class="t" style="left:146.4px;top:200.47px;font-size:9.6px;color:#1f1f1f">Line</div>
<svg class="a" style="left:310.7px;top:202.70px" width="5" height="5.2" viewBox="0 0 10 10"><path d="M1 0l9 5-9 5z" fill="#5f6368"/></svg>
<div class="t" style="left:146.4px;top:222.27px;font-size:9.6px;color:#1f1f1f">Word art</div>
<div class="t" style="left:146.4px;top:254.97px;font-size:9.6px;color:#1f1f1f">Video</div>
<div class="t" style="left:146.4px;top:277.17px;font-size:9.6px;color:#1f1f1f">Audio</div>
<div class="t" style="left:146.4px;top:309.77px;font-size:9.6px;color:#b9bbbd">Special characters</div>
<div class="t" style="left:146.4px;top:331.77px;font-size:9.6px;color:#b9bbbd">Animation</div>
<div class="t" style="left:146.4px;top:364.77px;font-size:9.6px;color:#b9bbbd">Link</div>
<div class="t" style="right:384.2px;top:364.77px;font-size:9.6px;color:#b9bbbd">Ctrl+K</div>
<div class="t" style="left:146.4px;top:386.77px;font-size:9.6px;color:#1f1f1f">Comment</div>
<div class="t" style="right:384.2px;top:386.77px;font-size:9.6px;color:#1f1f1f">Ctrl+Alt+M</div>


<svg class="a" style="left:0;top:0" width="700" height="410" viewBox="0 0 700 410"><rect x="130" y="49.7" width="8.3" height="8.6" rx="1.2" fill="none" stroke="#3f4245" stroke-width="1.2"/><path d="M131.8 56.6l1.5-1.7 1 1 1.3-1.8 1.6 2.5z" fill="#3f4245"/><path d="M129.1 71.6h6.8M132.5 71.6v7.8" stroke="#3f4245" stroke-width="1.25"/><path d="M135.3 74.7h4.7M137.65 74.7v4.7" stroke="#3f4245" stroke-width="1.2"/><circle cx="132.6" cy="95.6" r="3.1" fill="none" stroke="#3f4245" stroke-width="1.15"/><path d="M135.9 97h3.6v5.3h-5.8v-2.6" fill="none" stroke="#3f4245" stroke-width="1.15"/><rect x="132.6" y="114.9" width="7.4" height="6.6" rx="1.1" fill="none" stroke="#3f4245" stroke-width="1.15"/><path d="M130.6 117.2v5.9a1 1 0 0 0 1 1h6.4" fill="none" stroke="#3f4245" stroke-width="1.15"/><circle cx="136.3" cy="117.2" r="1.1" fill="none" stroke="#3f4245" stroke-width=".9"/><path d="M134.4 120.3a2 1.3 0 0 1 3.8 0" fill="none" stroke="#3f4245" stroke-width=".9"/><circle cx="134.1" cy="136" r="1.45" fill="#3f4245"/><circle cx="130.3" cy="144.2" r="1.45" fill="#3f4245"/><circle cx="134.1" cy="144.2" r="1.45" fill="#3f4245"/><circle cx="137.9" cy="144.2" r="1.45" fill="#3f4245"/><path d="M134.1 136v8M130.3 144v-5.5h7.6v5.5" fill="none" stroke="#3f4245" stroke-width="1.1"/><rect x="130.8" y="158" width="7.4" height="8.2" rx="1" fill="none" stroke="#3f4245" stroke-width="1.2"/><path d="M130.8 159.6h7.4" stroke="#3f4245" stroke-width="2"/><path d="M133.3 160.5v5.7M135.7 160.5v5.7" stroke="#3f4245" stroke-width="1.05"/><rect x="130.8" y="179.8" width="7.8" height="7.8" rx="1" fill="none" stroke="#3f4245" stroke-width="1.2"/><path d="M132.6 182.6v3.4M134.5 181v5M136.4 184.2v1.8" stroke="#3f4245" stroke-width="1.1"/><path d="M131 201.7l7.5 7.5" stroke="#3f4245" stroke-width="1.05"/><circle cx="131" cy="201.7" r="1.6" fill="#3f4245"/><circle cx="138.5" cy="209.2" r="1.6" fill="#3f4245"/><path d="M132.6 230.6l3.1-7.4 3.2 7.4" fill="none" stroke="#c9cbcd" stroke-width="1.3"/><path d="M130.6 230.7l3.1-7.6h.6l3 7.6M131.9 227.9h4" fill="none" stroke="#3f4245" stroke-width="1.25"/><rect x="129.7" y="258.7" width="9.4" height="5.5" fill="none" stroke="#3f4245" stroke-width="1.2"/><path d="M129.1 256h10.5v2.3H129.1z" fill="#3f4245"/><path d="M131.3 256.2l1 1.9M133.8 256.2l1 1.9M136.3 256.2l1 1.9" stroke="#fff" stroke-width=".8"/><path d="M130.4 280.3h1.8l2.6-2.3v7.6l-2.6-2.3h-1.8z" fill="none" stroke="#3f4245" stroke-width="1.15" stroke-linejoin="round"/><path d="M135.8 279.8a2.5 2.5 0 0 1 0 4" fill="none" stroke="#8a8c8e" stroke-width="1.1"/><path d="M136.6 277.4a5 5 0 0 1 0 8.8" fill="none" stroke="#3f4245" stroke-width="1.1"/><path d="M130.3 318.5h3v-1.6a3.9 3.9 0 1 1 3.1 0v1.6h3" fill="none" stroke="#c2c4c6" stroke-width="1.2"/><circle cx="136.5" cy="335" r="3.3" fill="none" stroke="#c2c4c6" stroke-width="1.1"/><path d="M133.1 334a3.6 3.6 0 0 0 4.6 4.7M131.3 335.8a3.6 3.6 0 0 0 4.6 4.7" fill="none" stroke="#c2c4c6" stroke-width="1.1"/><path d="M133.4 366.3h-1.8a2.75 2.75 0 0 0 0 5.5h1.8M135.6 366.3h1.8a2.75 2.75 0 0 1 0 5.5h-1.8M132.3 369.05h4.4" fill="none" stroke="#c2c4c6" stroke-width="1.15"/><path d="M129.7 386.6h9.5v7.2h-7.3l-2.2 2.1z" fill="none" stroke="#3f4245" stroke-width="1.2" stroke-linejoin="round"/><path d="M134.45 388.2v4M132.45 390.2h4" stroke="#3f4245" stroke-width="1.1"/></svg>
<!-- ===== SHAPE SUBMENU ===== -->
<div class="a" style="left:326px;top:86.3px;width:177px;height:94.2px;background:#fff;border-radius:4px;box-shadow:0 2px 5px rgba(0,0,0,.25)"></div>
<div class="a" style="left:331.5px;top:90px;width:171px;height:24px;background:#efefef"></div>
<div class="a" style="left:335.3px;top:97.3px;width:10.5px;height:9px;border:1px solid #5f6368"></div>
<div class="t" style="left:352.2px;top:97.4px;font-size:9.6px;color:#1f1f1f">Shapes</div>
<svg class="a" style="left:486px;top:99.6px" width="5" height="5.2" viewBox="0 0 10 10"><path d="M1 0l9 5-9 5z" fill="#1f1f1f"/></svg>
<svg class="a" style="left:334.8px;top:119px" width="11.5" height="8.5" viewBox="0 0 23 17"><path d="M1.5 5.5h10v-4l10 7-10 7v-4h-10z" fill="none" stroke="#444746" stroke-width="1.8" stroke-linejoin="round"/></svg>
<div class="t" style="left:352.2px;top:118.7px;font-size:9.6px;color:#1f1f1f">Arrows</div>
<svg class="a" style="left:486px;top:120.9px" width="5" height="5.2" viewBox="0 0 10 10"><path d="M1 0l9 5-9 5z" fill="#5f6368"/></svg>
<svg class="a" style="left:335px;top:139.5px" width="11.5" height="10.5" viewBox="0 0 23 21"><path d="M1.5 1.5h20v14H12l-3 3.5-3-3.5H1.5z" fill="none" stroke="#444746" stroke-width="1.8" stroke-linejoin="round"/></svg>
<div class="t" style="left:352.2px;top:140.3px;font-size:9.6px;color:#1f1f1f">Callouts</div>
<svg class="a" style="left:486px;top:142.5px" width="5" height="5.2" viewBox="0 0 10 10"><path d="M1 0l9 5-9 5z" fill="#5f6368"/></svg>
<svg class="a" style="left:335.8px;top:162px" width="10.5" height="9.5" viewBox="0 0 21 19"><path d="M7.5 1.5h6v5h6v6h-6v5h-6v-5h-6v-6h6z" fill="none" stroke="#444746" stroke-width="1.8" stroke-linejoin="round"/></svg>
<div class="t" style="left:352.2px;top:161.9px;font-size:9.6px;color:#1f1f1f">Equation</div>
<svg class="a" style="left:486px;top:164.1px" width="5" height="5.2" viewBox="0 0 10 10"><path d="M1 0l9 5-9 5z" fill="#5f6368"/></svg>

<!-- ===== SHAPES PALETTE ===== -->
<div class="a" style="left:502px;top:90.5px;width:187px;height:143px;background:#fff;border-radius:5px;box-shadow:0 2px 5px rgba(0,0,0,.25)"></div>
<div class="a" style="left:502px;top:119px;width:187px;height:1px;background:#e3e3e3"></div>
<div class="a" style="left:502px;top:174.5px;width:187px;height:1px;background:#e3e3e3"></div>
<svg class="a" style="left:0;top:0" width="700" height="410" viewBox="0 0 700 410"><rect x="581.3" y="99" width="14" height="15" fill="#ececec"/><rect x="508.45" y="102.25" width="10.5" height="8.5" rx="0" fill="none" stroke="#333333" stroke-width="1.0"/><rect x="523.35" y="102.25" width="10.5" height="8.5" rx="2.2" fill="none" stroke="#333333" stroke-width="1.0"/><path d="M538.25 102.25 L545.75 102.25 L548.75 105.25 L548.75 110.75 L538.25 110.75 Z" fill="none" stroke="#333333" stroke-width="1.0" stroke-linejoin="round" /><path d="M553.15 105.25 L556.15 102.25 L560.65 102.25 L563.65 105.25 L563.65 110.75 L553.15 110.75 Z" fill="none" stroke="#333333" stroke-width="1.0" stroke-linejoin="round" /><path d="M568.05 105.25 L571.05 102.25 L578.55 102.25 L578.55 107.75 L575.55 110.75 L568.05 110.75 Z" fill="none" stroke="#333333" stroke-width="1.0" stroke-linejoin="round" /><path d="M582.95 105.25 A3 3 0 0 1 585.95 102.25 L590.45 102.25 L593.45 105.25 L593.45 110.75 L582.95 110.75 Z" fill="none" stroke="#333333" stroke-width="1.0" stroke-linejoin="round" /><path d="M597.85 102.25 L605.35 102.25 A3 3 0 0 1 608.35 105.25 L608.35 110.75 L597.85 110.75 Z" fill="none" stroke="#333333" stroke-width="1.0" stroke-linejoin="round" /><path d="M612.75 105.25 A3 3 0 0 1 615.75 102.25 L620.25 102.25 A3 3 0 0 1 623.25 105.25 L623.25 110.75 L612.75 110.75 Z" fill="none" stroke="#333333" stroke-width="1.0" stroke-linejoin="round" /><path d="M627.65 105.25 A3 3 0 0 1 630.65 102.25 L638.15 102.25 L638.15 107.75 A3 3 0 0 1 635.15 110.75 L627.65 110.75 Z" fill="none" stroke="#333333" stroke-width="1.0" stroke-linejoin="round" /><circle cx="513.7" cy="132.8" r="5.4" fill="none" stroke="#333333" stroke-width="1.0"/><path d="M528.60 127.80 L533.90 136.80 L523.30 136.80 Z" fill="none" stroke="#333333" stroke-width="1.0" stroke-linejoin="round" /><path d="M538.50 127.60 L548.80 137.80 L538.50 137.80 Z" fill="none" stroke="#333333" stroke-width="1.0" stroke-linejoin="round" /><path d="M555.90 128.30 L563.70 128.30 L560.90 137.30 L553.10 137.30 Z" fill="none" stroke="#333333" stroke-width="1.0" stroke-linejoin="round" /><path d="M570.00 128.30 L576.60 128.30 L578.60 137.30 L568.00 137.30 Z" fill="none" stroke="#333333" stroke-width="1.0" stroke-linejoin="round" /><path d="M588.20 127.50 L593.50 132.80 L588.20 138.10 L582.90 132.80 Z" fill="none" stroke="#333333" stroke-width="1.0" stroke-linejoin="round" /><path d="M603.10 127.50 L608.43 131.37 L606.39 137.63 L599.81 137.63 L597.77 131.37 Z" fill="none" stroke="#333333" stroke-width="1.0" stroke-linejoin="round" /><path d="M623.70 132.80 L620.85 137.74 L615.15 137.74 L612.30 132.80 L615.15 127.86 L620.85 127.86 Z" fill="none" stroke="#333333" stroke-width="1.0" stroke-linejoin="round" /><text x="618.00" y="134.80" font-size="5.6" text-anchor="middle" fill="#222" font-weight="bold" font-family="Liberation Sans" >6</text><path d="M632.90 127.10 L637.36 129.25 L638.46 134.07 L635.37 137.94 L630.43 137.94 L627.34 134.07 L628.44 129.25 Z" fill="none" stroke="#333333" stroke-width="1.0" stroke-linejoin="round" /><text x="632.90" y="134.80" font-size="5.6" text-anchor="middle" fill="#222" font-weight="bold" font-family="Liberation Sans" >7</text><path d="M649.98 127.53 L653.07 130.62 L653.07 134.98 L649.98 138.07 L645.62 138.07 L642.53 134.98 L642.53 130.62 L645.62 127.53 Z" fill="none" stroke="#333333" stroke-width="1.0" stroke-linejoin="round" /><text x="647.80" y="134.80" font-size="5.6" text-anchor="middle" fill="#222" font-weight="bold" font-family="Liberation Sans" >8</text><path d="M664.46 127.38 L667.31 129.45 L668.40 132.80 L667.31 136.15 L664.46 138.22 L660.94 138.22 L658.09 136.15 L657.00 132.80 L658.09 129.45 L660.94 127.38 Z" fill="none" stroke="#333333" stroke-width="1.0" stroke-linejoin="round" /><text x="662.70" y="134.80" font-size="4.9" text-anchor="middle" fill="#222" font-weight="bold" font-family="Liberation Sans" textLength='5.2' lengthAdjust='spacingAndGlyphs'>10</text><path d="M679.08 127.29 L681.63 128.77 L683.11 131.32 L683.11 134.28 L681.63 136.83 L679.08 138.31 L676.12 138.31 L673.57 136.83 L672.09 134.28 L672.09 131.32 L673.57 128.77 L676.12 127.29 Z" fill="none" stroke="#333333" stroke-width="1.0" stroke-linejoin="round" /><text x="677.60" y="134.80" font-size="4.9" text-anchor="middle" fill="#222" font-weight="bold" font-family="Liberation Sans" textLength='5.2' lengthAdjust='spacingAndGlyphs'>12</text><path d="M513.70 147.40 L513.70 142.10 A5.3 5.3 0 1 0 519.00 147.40 Z" fill="none" stroke="#333333" stroke-width="1.0" stroke-linejoin="round" /><path d="M526.60 142.80 A5.3 5.3 0 0 1 532.20 146.90" fill="none" stroke="#333333" stroke-width="1.0" stroke-linejoin="round" /><path d="M542.00 142.40 L545.50 142.40 L548.30 149.90 A4.5 4.5 0 0 1 543.50 152.60 A5 5 0 0 1 538.70 148.20 A5 5 0 0 1 542.00 142.40 Z" fill="none" stroke="#333333" stroke-width="1.0" stroke-linejoin="round" /><path d="M563.70 142.10 L563.70 147.40 A5.3 5.3 0 1 1 558.40 142.10 Z" fill="none" stroke="#333333" stroke-width="1.0" stroke-linejoin="round" /><rect x="568.05" y="142.15" width="10.5" height="10.5" rx="0" fill="none" stroke="#333333" stroke-width="1.0"/><rect x="570.05" y="144.15" width="6.5" height="6.5" rx="0" fill="none" stroke="#333333" stroke-width="1.0"/><path d="M582.90 142.10 L593.50 142.10 L590.50 145.10 L585.90 145.10 L585.90 149.70 L582.90 152.70 Z" fill="none" stroke="#333333" stroke-width="1.0" stroke-linejoin="round" /><path d="M597.80 142.10 L602.10 142.10 L602.10 146.40 L608.40 146.40 L608.40 152.70 L597.80 152.70 Z" fill="none" stroke="#333333" stroke-width="1.0" stroke-linejoin="round" /><path d="M619.50 142.10 L623.30 142.10 L616.50 152.70 L612.70 152.70 Z" fill="none" stroke="#333333" stroke-width="1.0" stroke-linejoin="round" /><path d="M629.90 142.20 L635.90 142.20 L635.90 144.40 L638.20 144.40 L638.20 150.40 L635.90 150.40 L635.90 152.60 L629.90 152.60 L629.90 150.40 L627.60 150.40 L627.60 144.40 L629.90 144.40 Z" fill="none" stroke="#333333" stroke-width="1.0" stroke-linejoin="round" /><path d="M644.80 142.40 L650.80 142.40 Q650.80 144.70 653.10 144.70 L653.10 150.10 Q650.80 150.10 650.80 152.40 L644.80 152.40 Q644.80 150.10 642.50 150.10 L642.50 144.70 Q644.80 144.70 644.80 142.40 Z" fill="none" stroke="#333333" stroke-width="1.0" stroke-linejoin="round" /><path d="M658.20 143.90 L658.20 150.90 A4.5 1.8 0 0 0 667.20 150.90 L667.20 143.90" fill="none" stroke="#333333" stroke-width="1.0" stroke-linejoin="round" /><ellipse cx="662.70" cy="143.90" rx="4.5" ry="1.8" fill="none" stroke="#333333" stroke-width="1.0"/><path d="M672.30 144.90 L675.10 142.10 L682.90 142.10 L682.90 149.90 L680.10 152.70 L672.30 152.70 Z" fill="none" stroke="#333333" stroke-width="1.0" stroke-linejoin="round" /><path d="M672.30 144.90 L680.10 144.90 L682.90 142.10 M680.10 144.90 L680.10 152.70" fill="none" stroke="#333333" stroke-width="1.0" stroke-linejoin="round" /><rect x="508.45" y="156.85" width="10.5" height="10.5" rx="0" fill="none" stroke="#333333" stroke-width="1.0"/><rect x="509.70" y="158.10" width="8" height="8" fill="none" stroke="#9a9a9a" stroke-width="1.6"/><circle cx="528.60" cy="162.10" r="5.4" fill="none" stroke="#333333" stroke-width="1.0"/><circle cx="528.60" cy="162.10" r="2.6" fill="none" stroke="#333333" stroke-width="1.0"/><circle cx="543.50" cy="162.10" r="5.4" fill="none" stroke="#333333" stroke-width="1.0"/><circle cx="543.50" cy="162.10" r="3.6" fill="none" stroke="#333333" stroke-width="1.0"/><path d="M540.70 163.30 L544.70 159.30 M542.30 164.90 L546.30 160.90" fill="none" stroke="#333333" stroke-width="1.0" stroke-linejoin="round" /><path d="M553.10 163.60 A5.3 5.3 0 0 1 563.70 163.60 L561.40 163.60 A3 3 0 0 0 555.40 163.60 Z" fill="none" stroke="#333333" stroke-width="1.0" stroke-linejoin="round" /><path d="M568.50 156.80 L578.10 156.80 L578.10 164.40 L575.10 167.40 L568.50 167.40 Z" fill="none" stroke="#333333" stroke-width="1.0" stroke-linejoin="round" /><path d="M578.10 164.40 L574.80 164.10 L575.10 167.40" fill="none" stroke="#333333" stroke-width="1.0" stroke-linejoin="round" /><circle cx="588.20" cy="162.10" r="5.4" fill="none" stroke="#333333" stroke-width="1.0"/><circle cx="586.40" cy="160.60" r="0.7" fill="#333333"/><circle cx="590.00" cy="160.60" r="0.7" fill="#333333"/><path d="M585.70 163.60 Q588.20 165.90 590.70 163.60" fill="none" stroke="#333333" stroke-width="1.0" stroke-linejoin="round" /><path d="M603.10 167.30 L598.70 162.60 A2.7 2.7 0 0 1 603.10 158.60 A2.7 2.7 0 0 1 607.50 162.60 Z" fill="none" stroke="#333333" stroke-width="1.0" stroke-linejoin="round" /><path d="M613.00 156.80 L615.20 157.60 L615.50 158.90 L619.00 161.60 L619.50 163.60 L623.00 167.60 L618.00 164.60 L617.00 162.60 L614.50 160.10 Z" fill="none" stroke="#333333" stroke-width="1.0" stroke-linejoin="round" /><circle cx="632.90" cy="162.10" r="2.6" fill="none" stroke="#333333" stroke-width="1.0"/><path d="M636.70 162.10 L638.40 162.10" stroke="#333333" stroke-width="1.0"/><path d="M635.59 164.79 L636.79 165.99" stroke="#333333" stroke-width="1.0"/><path d="M632.90 165.90 L632.90 167.60" stroke="#333333" stroke-width="1.0"/><path d="M630.21 164.79 L629.01 165.99" stroke="#333333" stroke-width="1.0"/><path d="M629.10 162.10 L627.40 162.10" stroke="#333333" stroke-width="1.0"/><path d="M630.21 159.41 L629.01 158.21" stroke="#333333" stroke-width="1.0"/><path d="M632.90 158.30 L632.90 156.60" stroke="#333333" stroke-width="1.0"/><path d="M635.59 159.41 L636.79 158.21" stroke="#333333" stroke-width="1.0"/><path d="M650.60 156.80 A5.4 5.4 0 1 0 650.60 167.40 A4.2 5.3 0 0 1 650.60 156.80 Z" fill="none" stroke="#333333" stroke-width="1.0" stroke-linejoin="round" /><g fill="none" stroke="#333333" stroke-width="1"><circle cx="662.70" cy="158.80" r="1.9"/><circle cx="665.50" cy="159.90" r="1.7"/><circle cx="666.40" cy="162.60" r="1.7"/><circle cx="664.90" cy="165.20" r="1.7"/><circle cx="662.00" cy="165.70" r="1.7"/><circle cx="659.40" cy="164.30" r="1.7"/><circle cx="658.90" cy="161.40" r="1.7"/><circle cx="660.30" cy="159.20" r="1.7"/></g><circle cx="662.70" cy="162.10" r="4.2" fill="#fff"/><rect x="508.45" y="184.50" width="10.5" height="9" rx="0" fill="none" stroke="#333333" stroke-width="1.0"/><rect x="523.35" y="184.50" width="10.5" height="9" rx="2.5" fill="none" stroke="#333333" stroke-width="1.0"/><path d="M538.20 189.00 L543.50 186.00 L548.80 189.00 L543.50 192.00 Z" fill="none" stroke="#333333" stroke-width="1.0" stroke-linejoin="round" /><path d="M555.90 184.50 L563.70 184.50 L560.90 193.50 L553.10 193.50 Z" fill="none" stroke="#333333" stroke-width="1.0" stroke-linejoin="round" /><rect x="568.05" y="184.50" width="10.5" height="9" rx="0" fill="none" stroke="#333333" stroke-width="1.0"/><rect x="569.10" y="185.00" width="1.6" height="8" fill="#888"/><rect x="575.90" y="185.00" width="1.6" height="8" fill="#888"/><rect x="582.95" y="184.50" width="10.5" height="9" rx="0" fill="none" stroke="#333333" stroke-width="1.0"/><rect x="583.70" y="185.00" width="9" height="1.6" fill="#888"/><rect x="583.70" y="185.00" width="1.6" height="8" fill="#888"/><path d="M597.80 184.50 L608.40 184.50 L608.40 191.50 Q605.10 190.00 603.10 192.00 Q600.60 194.50 597.80 192.50 Z" fill="none" stroke="#333333" stroke-width="1.0" stroke-linejoin="round" /><path d="M612.70 186.50 L621.50 186.50 L621.50 192.00 Q619.00 191.00 617.00 192.50 Q615.00 194.00 612.70 192.50 Z" fill="none" stroke="#333333" stroke-width="1.0" stroke-linejoin="round" /><path d="M614.00 186.50 L614.00 185.20 L622.50 185.20 L622.50 191.00 M615.00 185.20 L615.00 184.00 L623.50 184.00 L623.50 190.00" fill="none" stroke="#555" stroke-width="0.8"/><rect x="627.65" y="186.25" width="10.5" height="5.5" rx="2.75" fill="none" stroke="#333333" stroke-width="1.0"/><path d="M642.50 189.00 L645.30 185.70 L650.30 185.70 L653.10 189.00 L650.30 192.30 L645.30 192.30 Z" fill="none" stroke="#333333" stroke-width="1.0" stroke-linejoin="round" /><path d="M657.40 188.50 L668.00 185.00 L668.00 193.00 L657.40 193.00 Z" fill="none" stroke="#333333" stroke-width="1.0" stroke-linejoin="round" /><path d="M672.30 185.00 L682.90 185.00 L681.10 193.00 L674.10 193.00 Z" fill="none" stroke="#333333" stroke-width="1.0" stroke-linejoin="round" /><circle cx="513.70" cy="203.70" r="4.6" fill="none" stroke="#333333" stroke-width="1.0"/><path d="M523.60 199.20 L533.60 199.20 L533.60 205.20 L528.60 208.50 L523.60 205.20 Z" fill="none" stroke="#333333" stroke-width="1.0" stroke-linejoin="round" /><path d="M538.20 202.70 L541.50 199.20 L548.80 199.20 L548.80 208.20 L538.20 208.20 Z" fill="none" stroke="#333333" stroke-width="1.0" stroke-linejoin="round" /><path d="M553.10 200.20 Q555.90 201.70 558.40 200.20 Q560.90 198.20 563.70 199.20 L563.70 207.20 Q560.90 205.70 558.40 207.20 Q555.90 209.20 553.10 208.20 Z" fill="none" stroke="#333333" stroke-width="1.0" stroke-linejoin="round" /><circle cx="573.30" cy="203.70" r="5" fill="none" stroke="#333333" stroke-width="1.0"/><path d="M569.80 200.20 L576.80 207.20 M576.80 200.20 L569.80 207.20" fill="none" stroke="#333333" stroke-width="1.0" stroke-linejoin="round" /><circle cx="588.20" cy="203.70" r="5" fill="none" stroke="#333333" stroke-width="1.0"/><path d="M583.20 203.70 L593.20 203.70 M588.20 198.70 L588.20 208.70" fill="none" stroke="#333333" stroke-width="1.0" stroke-linejoin="round" /><path d="M600.10 199.20 L606.10 199.20 L600.10 208.20 L606.10 208.20 Z" fill="none" stroke="#333333" stroke-width="1.0" stroke-linejoin="round" /><path d="M618.00 198.90 L621.00 203.70 L618.00 208.50 L615.00 203.70 Z" fill="none" stroke="#333333" stroke-width="1.0" stroke-linejoin="round" /><path d="M615.00 203.70 L621.00 203.70" fill="none" stroke="#333333" stroke-width="1.0" stroke-linejoin="round" /><path d="M632.90 199.20 L637.90 207.70 L627.90 207.70 Z" fill="none" stroke="#333333" stroke-width="1.0" stroke-linejoin="round" /><path d="M642.80 199.70 L652.80 199.70 L647.80 208.20 Z" fill="none" stroke="#333333" stroke-width="1.0" stroke-linejoin="round" /><path d="M660.20 199.20 L667.70 199.20 A2.5 4.5 0 0 0 667.70 208.20 L660.20 208.20 A2.5 4.5 0 0 1 660.20 199.20 Z" fill="none" stroke="#333333" stroke-width="1.0" stroke-linejoin="round" /><path d="M672.30 198.90 L677.60 198.90 A4.8 4.8 0 0 1 677.60 208.50 L672.30 208.50 Z" fill="none" stroke="#333333" stroke-width="1.0" stroke-linejoin="round" /><path d="M518.50 223.30 L513.70 223.30 A4.8 4.8 0 1 1 518.50 218.50 Z" fill="none" stroke="#333333" stroke-width="1.0" stroke-linejoin="round" /><path d="M524.60 215.00 L524.60 222.00 A4 1.5 0 0 0 532.60 222.00 L532.60 215.00" fill="none" stroke="#333333" stroke-width="1.0" stroke-linejoin="round" /><ellipse cx="528.60" cy="215.00" rx="4" ry="1.5" fill="none" stroke="#333333" stroke-width="1.0"/><path d="M541.50 214.00 L545.50 214.00 A2.8 4.5 0 0 1 545.50 223.00 L541.50 223.00 A2.8 4.5 0 0 1 541.50 214.00 Z M545.50 214.00 A2.8 4.5 0 0 0 545.50 223.00" fill="none" stroke="#333333" stroke-width="1.0" stroke-linejoin="round" /><path d="M553.40 218.50 L555.90 214.50 L559.90 214.50 A4 4 0 0 1 559.90 222.50 L555.90 222.50 Z" fill="none" stroke="#333333" stroke-width="1.0" stroke-linejoin="round" /></svg>

<!-- ===== RED BOXES ===== -->
<div class="a" style="left:108px;top:18.5px;width:57px;height:26.3px;border:3.5px solid #fc3e47;border-radius:2.5px"></div>
<div class="a" style="left:116.8px;top:86.8px;width:208.2px;height:27.2px;border:3.5px solid #fc3e47;border-radius:2.5px"></div>
<div class="a" style="left:330.8px;top:88.8px;width:174.2px;height:27.2px;border:3.5px solid #fc3e47;border-radius:2.5px"></div>

<!-- ===== ARROW ===== -->
<svg class="a" style="left:0;top:0" width="700" height="410" viewBox="0 0 700 410"><path d="M497 164 L489.7 186.5 L485.9 182.9 L421 260.4 L419.3 259.2 L481 178.1 L476.2 175.5 Z" fill="#fc424b" stroke="#fc424b" stroke-width=".4" stroke-linejoin="round"/></svg>

<!-- window border -->
<div class="a" style="left:0;top:0;width:700px;height:410px;border:1px solid #bcbcbc;box-shadow:inset 1px 1px 0 #fff;z-index:50"></div>
</body></html>
